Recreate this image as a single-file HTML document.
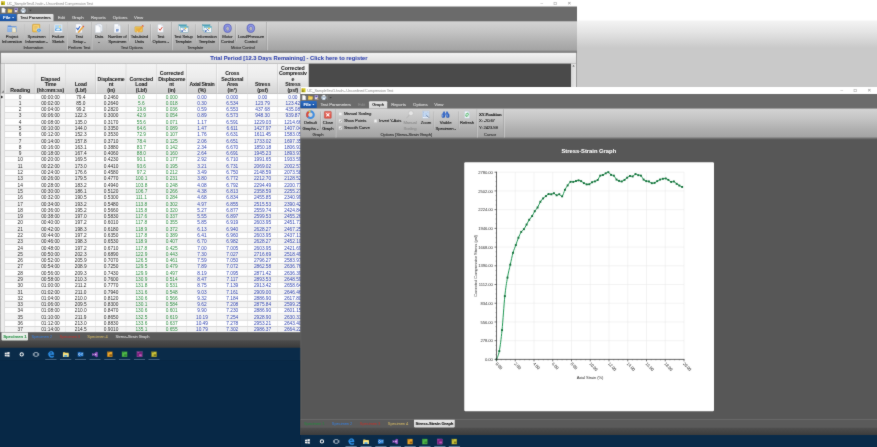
<!DOCTYPE html>
<html><head><meta charset="utf-8"><title>Unconfined Compression Test</title>
<style>
html,body{margin:0;padding:0;}
body{width:877px;height:447px;position:relative;overflow:hidden;background:#072846;font-family:"Liberation Sans",sans-serif;}
div{position:absolute;box-sizing:border-box;}
.t{white-space:nowrap;-webkit-text-stroke:0.25px currentColor;}
.tl{filter:brightness(1);}
.k{-webkit-text-stroke:0.42px currentColor;}
svg{position:absolute;overflow:visible;}
.w{overflow:hidden;}
.d{font-size:19.2px;line-height:19.2px;letter-spacing:-0.12px;-webkit-text-stroke:0;transform:translateX(-50%);}
.c0{color:#2a2a2a;}.c1{color:#2c8c40;}.c2{color:#3044b0;}
.r0,.r1{left:3.2px;width:1232px;height:25.16px;border-bottom:2px solid #d8d8d8;background:#fff;}
.r1{background:#f4f4f4;}
</style></head><body>
<svg width="0" height="0" style="left:0;top:0"><defs><filter id="soft" x="0" y="0" width="100%" height="100%" color-interpolation-filters="sRGB"><feConvolveMatrix order="3" kernelMatrix="0.02 0.06 0.02 0.06 0.680 0.06 0.02 0.06 0.02" divisor="1" edgeMode="duplicate" preserveAlpha="true"/></filter></defs></svg>
<div id="soft" style="left:0;top:0;width:877px;height:447px;filter:url(#soft);">
<div id="root" style="left:0;top:0;width:3508px;height:1788px;transform:scale(0.25);transform-origin:0 0;">


<div style="left:2308px;top:0px;width:1200px;height:348px;background:linear-gradient(#ffffff 0,#ffffff 80px,#f3f3f3 84px,#e4e4e4 128px,#c9c9c9 192px,#c9c9c9 348px);"></div>
<div class="w" style="left:0;top:0;width:2308px;height:1392px;background:#4b4b4b;">
<div style="left:0px;top:0px;width:2308px;height:27.2px;background:#ffffff;"></div>
<div style="left:4.4px;top:4.8px;width:16px;height:15.6px;background:linear-gradient(#d6cc2c,#c2b81e);"></div>
<div style="left:6px;top:13.2px;width:7.2px;height:5.2px;background:rgba(90,84,20,0.75);"></div>
<div style="left:5.6px;top:6.4px;width:4px;height:3.6px;background:rgba(190,70,40,0.7);"></div>
<div style="left:2215.2px;top:7.6px;width:12px;height:12px;background:transparent;border:2px solid #a0a0a0;"></div>
<div style="left:0px;top:27.2px;width:2308px;height:58px;background:#6b6b6b;"></div>
<svg style="left:6.4px;top:31.2px" width="16" height="20.8" viewBox="0 0 8 10.4"><path d="M0.5 0.5h4.5l2.5 2.5v6.9h-7z" fill="#fafafa" stroke="#b8b8b8" stroke-width="0.8"/></svg>
<svg style="left:30.4px;top:32.8px" width="19.2" height="17.6" viewBox="0 0 9.6 8.8"><path d="M0.4 1h3.2l1 1.2h4.6v6.2h-8.8z" fill="#e8b93c"/><path d="M0.4 8.4l1.6-4.4h7.4l-1.4 4.4z" fill="#f6d767"/></svg>
<svg style="left:57.2px;top:31.2px" width="17.6" height="20.8" viewBox="0 0 8.8 10.4"><rect x="0.6" y="0.4" width="6.4" height="8.6" fill="#dcdcf4" stroke="#7a6aa8" stroke-width="0.8"/><rect x="1.6" y="1.4" width="4.2" height="3" fill="#5a4a9a"/><path d="M5 6l3 3.6" stroke="#c8a23c" stroke-width="1.6"/></svg>
<svg style="left:82.4px;top:30.8px" width="22.4" height="21.6" viewBox="0 0 11.2 10.8"><rect x="3" y="0.4" width="5.2" height="3.4" fill="#f4f4f4" stroke="#9aa0a8" stroke-width="0.6"/><rect x="0.6" y="3.2" width="10" height="4.6" rx="1" fill="#c9d2dc" stroke="#8894a2" stroke-width="0.6"/><rect x="2.8" y="6.4" width="5.6" height="3.8" fill="#ffffff" stroke="#6a98c8" stroke-width="0.6"/></svg>
<div style="left:109.2px;top:31.2px;width:2px;height:20px;background:#8a8a8a;"></div>
<svg style="left:116.8px;top:39.2px" width="9.6" height="6.4" viewBox="0 0 6 4"><path d="M0 0h6l-3 4z" fill="#3a3a3a"/></svg>
<div style="left:0px;top:55.6px;width:66px;height:29.2px;background:linear-gradient(#2a6cc4,#174f9e);border-radius:3.2px 3.2px 0 0;"></div>
<svg style="left:48px;top:68px" width="8.8" height="5.2" viewBox="0 0 6 4"><path d="M0 0h6l-3 4z" fill="#fff"/></svg>
<div style="left:69.2px;top:56.4px;width:144.4px;height:28.8px;background:linear-gradient(#e6e6e6,#d4d4d4);border-radius:4px 4px 0 0;"></div>
<div style="left:0px;top:85.2px;width:2308px;height:118.4px;background:linear-gradient(#d4d4d4 0,#c4c4c4 35%,#b0b0b0 70%,#a2a2a2 100%);"></div>
<svg style="left:28.8px;top:94.4px" width="38.4" height="38.4" viewBox="0 0 24 24"><path d="M1 5h8l2 2h12v14h-22z" fill="#5f8fd6"/><path d="M1 9h22v12h-22z" fill="#8fb6ea"/><path d="M1 9h22v3h-22z" fill="#a9c8f2"/><path d="M12 10h7l3 3v9h-10z" fill="#efe9cf" stroke="#a89c70" stroke-width="0.8"/></svg>
<svg style="left:126.8px;top:94.4px" width="38.4" height="38.4" viewBox="0 0 24 24"><rect x="2" y="2" width="18" height="19" rx="1.5" fill="#f2c254" stroke="#c58f1e" stroke-width="1.2"/><rect x="4.5" y="5" width="13" height="12" fill="#f9dc8a"/><path d="M6 8h9M6 11h9M6 14h6" stroke="#c9962e" stroke-width="1.2"/><circle cx="18" cy="17" r="5.2" fill="#3f8ee0" stroke="#e8f2ff" stroke-width="1"/><rect x="17.1" y="15.6" width="1.8" height="4.4" fill="#fff"/><circle cx="18" cy="13.8" r="1.1" fill="#fff"/></svg>
<svg style="left:213.6px;top:94.4px" width="38.4" height="38.4" viewBox="0 0 24 24"><rect x="2" y="2" width="20" height="20" fill="#f4f7fb" stroke="#c2ccd8" stroke-width="1"/><rect x="4" y="4" width="16" height="14" fill="#a9d3f3"/><circle cx="15.5" cy="8" r="2.4" fill="#fbe08a"/><path d="M4 18v-4l4-3 4 3 3-2 5 3v3z" fill="#5aa0dd"/><rect x="7" y="13" width="9" height="4" fill="#eaf4fc"/></svg>
<svg style="left:297.6px;top:94.4px" width="38.4" height="38.4" viewBox="0 0 24 24"><path d="M3 1h12l4 4v18h-16z" fill="#fbfbfd" stroke="#b9c0cc" stroke-width="1"/><path d="M5 11l3.4 4.2 5.6-8.4" stroke="#2f62c4" stroke-width="2.6" fill="none"/><path d="M7 19h9" stroke="#9ab0d8" stroke-width="1.4"/><path d="M9 20l11-13 3 2.6-11 13-4 1.6z" fill="#f0a63c"/><path d="M20 7l1.6-1.9 3 2.6-1.6 1.9z" fill="#d94a3c"/></svg>
<svg style="left:376.4px;top:94.4px" width="38.4" height="38.4" viewBox="0 0 24 24"><path d="M7 1h10l4 4v15h-14z" fill="#eef2f8" stroke="#b5bfcd" stroke-width="1"/><path d="M3 4h10l4 4v15h-14z" fill="#fbfcfe" stroke="#b5bfcd" stroke-width="1"/><path d="M13 4v4h4" fill="#dfe6f0" stroke="#b5bfcd" stroke-width="0.8"/></svg>
<svg style="left:450px;top:94.4px" width="38.4" height="38.4" viewBox="0 0 24 24"><path d="M4 1h11l5 5v17h-16z" fill="#fbfcfe" stroke="#b5bfcd" stroke-width="1"/><path d="M15 1v5h5" fill="#dfe6f0" stroke="#b5bfcd" stroke-width="0.8"/><path d="M7 9h10M7 12h10" stroke="#c5cfe0" stroke-width="1"/><path d="M9 15.5h6.5M8.5 18.5h6.5M10.8 13.8l-0.8 6.4M14 13.8l-0.8 6.4" stroke="#3f6fc2" stroke-width="1.3"/></svg>
<svg style="left:538.4px;top:94.4px" width="38.4" height="38.4" viewBox="0 0 24 24"><rect x="1" y="8" width="19" height="13" rx="1.5" fill="#efc55a" stroke="#c9972a" stroke-width="1"/><path d="M4 12h12M4 15h10M4 18h7" stroke="#c79a32" stroke-width="1.1"/><path d="M7 19l11.5-13.5 3.2 2.7-11.5 13.5-4.4 1.8z" fill="#f0a53a"/><path d="M18.5 5.5l1.7-2 3.2 2.7-1.7 2z" fill="#de4335"/><path d="M7 19l-1.2 4.5 4.4-1.8z" fill="#f6dca8"/></svg>
<svg style="left:623.2px;top:94.4px" width="38.4" height="38.4" viewBox="0 0 24 24"><path d="M5 2h10l4 4v16h-14z" fill="#fbfcfe" stroke="#b5bfcd" stroke-width="1"/><path d="M15 2v4h4" fill="#dfe6f0" stroke="#b5bfcd" stroke-width="0.8"/><path d="M8 13l3 4 5.4-8" stroke="#d8402f" stroke-width="2.4" fill="none"/></svg>
<svg style="left:714.4px;top:94.4px" width="38.4" height="38.4" viewBox="0 0 24 24"><rect x="1" y="3" width="19" height="15" fill="#f2f6fa" stroke="#5b9aa8" stroke-width="1"/><rect x="1" y="3" width="19" height="3.5" fill="#4fa3b8"/><rect x="5" y="7" width="19" height="15" fill="#f7fafd" stroke="#5b9aa8" stroke-width="1"/><rect x="5" y="7" width="19" height="3.5" fill="#58b0c4"/><path d="M9 20l8-8" stroke="#8a96a6" stroke-width="2"/><circle cx="17.5" cy="12" r="2.2" fill="#e8c04a"/><path d="M11 12l7 7" stroke="#4a72c0" stroke-width="1.8"/><rect x="7" y="17" width="4" height="4" fill="#3f68c0"/></svg>
<svg style="left:808px;top:94.4px" width="38.4" height="38.4" viewBox="0 0 24 24"><rect x="1" y="3" width="19" height="15" fill="#f2f6fa" stroke="#5b9aa8" stroke-width="1"/><rect x="1" y="3" width="19" height="3.5" fill="#4fa3b8"/><rect x="5" y="7" width="19" height="15" fill="#f7fafd" stroke="#5b9aa8" stroke-width="1"/><rect x="5" y="7" width="19" height="3.5" fill="#58b0c4"/><path d="M9 20l8-8" stroke="#8a96a6" stroke-width="2"/><circle cx="17.5" cy="12" r="2.2" fill="#e8c04a"/><path d="M11 12l7 7" stroke="#4a72c0" stroke-width="1.8"/><rect x="7" y="17" width="4" height="4" fill="#3f68c0"/></svg>
<svg style="left:890.8px;top:94.4px" width="38.4" height="38.4" viewBox="0 0 24 24"><ellipse cx="12" cy="12" rx="9.5" ry="10.5" fill="#6f78d2"/><ellipse cx="12.4" cy="11.4" rx="8.2" ry="9.2" fill="#8d95e4"/><ellipse cx="12" cy="12" rx="9.5" ry="10.5" fill="none" stroke="#4a51a8" stroke-width="1.2"/><ellipse cx="12" cy="12.6" rx="4" ry="5.4" fill="#c4c6da" stroke="#4a51a8" stroke-width="1.1"/><ellipse cx="12.6" cy="13.3" rx="2.7" ry="4" fill="#b4b4b8"/></svg>
<svg style="left:984.4px;top:94.4px" width="38.4" height="38.4" viewBox="0 0 24 24"><ellipse cx="12" cy="12" rx="9.5" ry="10.5" fill="#6f78d2"/><ellipse cx="12.4" cy="11.4" rx="8.2" ry="9.2" fill="#8d95e4"/><ellipse cx="12" cy="12" rx="9.5" ry="10.5" fill="none" stroke="#4a51a8" stroke-width="1.2"/><ellipse cx="12" cy="12.6" rx="4" ry="5.4" fill="#c4c6da" stroke="#4a51a8" stroke-width="1.1"/><ellipse cx="12.6" cy="13.3" rx="2.7" ry="4" fill="#b4b4b8"/></svg>
<div style="left:96px;top:97.2px;width:2px;height:68px;background:rgba(120,120,120,0.55);"></div>
<div style="left:98px;top:97.2px;width:2px;height:68px;background:rgba(240,240,240,0.55);"></div>
<div style="left:197.2px;top:97.2px;width:2px;height:68px;background:rgba(120,120,120,0.55);"></div>
<div style="left:199.2px;top:97.2px;width:2px;height:68px;background:rgba(240,240,240,0.55);"></div>
<div style="left:424px;top:97.2px;width:2px;height:68px;background:rgba(120,120,120,0.55);"></div>
<div style="left:426px;top:97.2px;width:2px;height:68px;background:rgba(240,240,240,0.55);"></div>
<div style="left:514.4px;top:97.2px;width:2px;height:68px;background:rgba(120,120,120,0.55);"></div>
<div style="left:516.4px;top:97.2px;width:2px;height:68px;background:rgba(240,240,240,0.55);"></div>
<div style="left:601.6px;top:97.2px;width:2px;height:68px;background:rgba(120,120,120,0.55);"></div>
<div style="left:603.6px;top:97.2px;width:2px;height:68px;background:rgba(240,240,240,0.55);"></div>
<div style="left:781.2px;top:97.2px;width:2px;height:68px;background:rgba(120,120,120,0.55);"></div>
<div style="left:783.2px;top:97.2px;width:2px;height:68px;background:rgba(240,240,240,0.55);"></div>
<div style="left:942px;top:97.2px;width:2px;height:68px;background:rgba(120,120,120,0.55);"></div>
<div style="left:944px;top:97.2px;width:2px;height:68px;background:rgba(240,240,240,0.55);"></div>
<div style="left:267.6px;top:88.4px;width:2px;height:114px;background:#9a9a9a;"></div>
<div style="left:269.6px;top:88.4px;width:2px;height:114px;background:#d8d8d8;"></div>
<div style="left:364.8px;top:88.4px;width:2px;height:114px;background:#9a9a9a;"></div>
<div style="left:366.8px;top:88.4px;width:2px;height:114px;background:#d8d8d8;"></div>
<div style="left:685.6px;top:88.4px;width:2px;height:114px;background:#9a9a9a;"></div>
<div style="left:687.6px;top:88.4px;width:2px;height:114px;background:#d8d8d8;"></div>
<div style="left:873.6px;top:88.4px;width:2px;height:114px;background:#9a9a9a;"></div>
<div style="left:875.6px;top:88.4px;width:2px;height:114px;background:#d8d8d8;"></div>
<div style="left:1066.4px;top:88.4px;width:2px;height:114px;background:#9a9a9a;"></div>
<div style="left:1068.4px;top:88.4px;width:2px;height:114px;background:#d8d8d8;"></div>
<div style="left:0px;top:202.4px;width:2308px;height:8.8px;background:linear-gradient(#8c8c8c,#7a7a7a);"></div>
<div style="left:2.8px;top:211.2px;width:2302px;height:44px;background:linear-gradient(#f3f3f3,#dcdcdc);"></div>
<div style="left:0px;top:211.2px;width:4.4px;height:1180px;background:#8c8c8c;"></div>
<div style="left:1236px;top:255.2px;width:1048px;height:1080px;background:#4a4a4a;"></div>
<div style="left:2283.6px;top:255.2px;width:20.8px;height:1080px;background:linear-gradient(90deg,#d6d6d6,#e8e8e8);"></div>
<svg style="left:2290px;top:260.4px" width="8.8" height="6.4" viewBox="0 0 6 4"><path d="M0 4h6l-3-4z" fill="#555"/></svg>
<div style="left:2304.4px;top:211.2px;width:3.6px;height:1180px;background:#9c9c9c;"></div>
<div class="tl" style="left:0;top:0;width:3508px;height:1788px;">
<div class="t" style="top:5.72px;font-size:15.6px;line-height:15.6px;color:#a2a2a2;letter-spacing:-0.76px;left:27.6px;">UC_SampleTest1.hsdn - Unconfined Compression Test</div>
<div class="t" style="top:4.44px;font-size:18px;line-height:18px;color:#a0a0a0;left:2167.2px;transform:translateX(-50%);">&#8211;</div>
<div class="t" style="top:1.72px;font-size:22.4px;line-height:22.4px;color:#a0a0a0;left:2277.6px;transform:translateX(-50%);">&#215;</div>
<div class="t" style="top:61.08px;font-size:17.6px;line-height:17.6px;color:#ffffff;font-weight:bold;letter-spacing:-0.2px;left:27.2px;transform:translateX(-50%);">File</div>
<div class="t k" style="top:61.08px;font-size:17.6px;line-height:17.6px;color:#1a1a1a;letter-spacing:-0.4px;left:141.4px;transform:translateX(-50%);">Test Parameters</div>
<div class="t k" style="top:61.08px;font-size:17.6px;line-height:17.6px;color:#d6d6d6;letter-spacing:-0.4px;left:245px;transform:translateX(-50%);">Edit</div>
<div class="t k" style="top:61.08px;font-size:17.6px;line-height:17.6px;color:#d6d6d6;letter-spacing:-0.4px;left:311.4px;transform:translateX(-50%);">Graph</div>
<div class="t k" style="top:61.08px;font-size:17.6px;line-height:17.6px;color:#d6d6d6;letter-spacing:-0.4px;left:393px;transform:translateX(-50%);">Reports</div>
<div class="t k" style="top:61.08px;font-size:17.6px;line-height:17.6px;color:#d6d6d6;letter-spacing:-0.4px;left:480px;transform:translateX(-50%);">Options</div>
<div class="t k" style="top:61.08px;font-size:17.6px;line-height:17.6px;color:#d6d6d6;letter-spacing:-0.4px;left:554px;transform:translateX(-50%);">View</div>
<div class="t k" style="top:137.4px;font-size:17px;line-height:17px;color:#1c1c1c;letter-spacing:-0.48px;left:48px;transform:translateX(-50%);">Project</div>
<div class="t k" style="top:159.4px;font-size:17px;line-height:17px;color:#1c1c1c;letter-spacing:-0.48px;left:48px;transform:translateX(-50%);">Information</div>
<div class="t k" style="top:137.4px;font-size:17px;line-height:17px;color:#1c1c1c;letter-spacing:-0.48px;left:146px;transform:translateX(-50%);">Specimen</div>
<div class="t k" style="top:159.4px;font-size:17px;line-height:17px;color:#1c1c1c;letter-spacing:-0.48px;left:146px;transform:translateX(-50%);">Information -</div>
<div class="t k" style="top:137.4px;font-size:17px;line-height:17px;color:#1c1c1c;letter-spacing:-0.48px;left:232.8px;transform:translateX(-50%);">Failure</div>
<div class="t k" style="top:159.4px;font-size:17px;line-height:17px;color:#1c1c1c;letter-spacing:-0.48px;left:232.8px;transform:translateX(-50%);">Sketch</div>
<div class="t k" style="top:137.4px;font-size:17px;line-height:17px;color:#1c1c1c;letter-spacing:-0.48px;left:316.8px;transform:translateX(-50%);">Test</div>
<div class="t k" style="top:159.4px;font-size:17px;line-height:17px;color:#1c1c1c;letter-spacing:-0.48px;left:316.8px;transform:translateX(-50%);">Setup -</div>
<div class="t k" style="top:137.4px;font-size:17px;line-height:17px;color:#1c1c1c;letter-spacing:-0.48px;left:395.6px;transform:translateX(-50%);">Data</div>
<div class="t k" style="top:159.4px;font-size:17px;line-height:17px;color:#1c1c1c;letter-spacing:-0.48px;left:395.6px;transform:translateX(-50%);">-</div>
<div class="t k" style="top:137.4px;font-size:17px;line-height:17px;color:#1c1c1c;letter-spacing:-0.48px;left:469.2px;transform:translateX(-50%);">Number of</div>
<div class="t k" style="top:159.4px;font-size:17px;line-height:17px;color:#1c1c1c;letter-spacing:-0.48px;left:469.2px;transform:translateX(-50%);">Specimen</div>
<div class="t k" style="top:137.4px;font-size:17px;line-height:17px;color:#1c1c1c;letter-spacing:-0.48px;left:557.6px;transform:translateX(-50%);">Tabulated</div>
<div class="t k" style="top:159.4px;font-size:17px;line-height:17px;color:#1c1c1c;letter-spacing:-0.48px;left:557.6px;transform:translateX(-50%);">Units</div>
<div class="t k" style="top:137.4px;font-size:17px;line-height:17px;color:#1c1c1c;letter-spacing:-0.48px;left:642.4px;transform:translateX(-50%);">Test</div>
<div class="t k" style="top:159.4px;font-size:17px;line-height:17px;color:#1c1c1c;letter-spacing:-0.48px;left:642.4px;transform:translateX(-50%);">Options -</div>
<div class="t k" style="top:137.4px;font-size:17px;line-height:17px;color:#1c1c1c;letter-spacing:-0.48px;left:733.6px;transform:translateX(-50%);">Test Setup</div>
<div class="t k" style="top:159.4px;font-size:17px;line-height:17px;color:#1c1c1c;letter-spacing:-0.48px;left:733.6px;transform:translateX(-50%);">Template</div>
<div class="t k" style="top:137.4px;font-size:17px;line-height:17px;color:#1c1c1c;letter-spacing:-0.48px;left:827.2px;transform:translateX(-50%);">Information</div>
<div class="t k" style="top:159.4px;font-size:17px;line-height:17px;color:#1c1c1c;letter-spacing:-0.48px;left:827.2px;transform:translateX(-50%);">Template</div>
<div class="t k" style="top:137.4px;font-size:17px;line-height:17px;color:#1c1c1c;letter-spacing:-0.48px;left:910px;transform:translateX(-50%);">Motor</div>
<div class="t k" style="top:159.4px;font-size:17px;line-height:17px;color:#1c1c1c;letter-spacing:-0.48px;left:910px;transform:translateX(-50%);">Control</div>
<div class="t k" style="top:137.4px;font-size:17px;line-height:17px;color:#1c1c1c;letter-spacing:-0.48px;left:1003.6px;transform:translateX(-50%);">Load/Pressure</div>
<div class="t k" style="top:159.4px;font-size:17px;line-height:17px;color:#1c1c1c;letter-spacing:-0.48px;left:1003.6px;transform:translateX(-50%);">Control</div>
<div class="t k" style="top:184.28px;font-size:16.8px;line-height:16.8px;color:#333333;letter-spacing:-0.48px;left:133.6px;transform:translateX(-50%);">Information</div>
<div class="t k" style="top:184.28px;font-size:16.8px;line-height:16.8px;color:#333333;letter-spacing:-0.48px;left:316.8px;transform:translateX(-50%);">Perform Test</div>
<div class="t k" style="top:184.28px;font-size:16.8px;line-height:16.8px;color:#333333;letter-spacing:-0.48px;left:526.8px;transform:translateX(-50%);">Test Options</div>
<div class="t k" style="top:184.28px;font-size:16.8px;line-height:16.8px;color:#333333;letter-spacing:-0.48px;left:781.2px;transform:translateX(-50%);">Template</div>
<div class="t k" style="top:184.28px;font-size:16.8px;line-height:16.8px;color:#333333;letter-spacing:-0.48px;left:971.6px;transform:translateX(-50%);">Motor Control</div>
<div class="t" style="top:221.76px;font-size:23.12px;line-height:23.12px;color:#2c3eac;font-weight:bold;left:1155.6px;transform:translateX(-50%);">Trial Period [12.3 Days Remaining] - Click here to register</div>
</div>
<div style="left:3.2px;top:255.2px;width:16.8px;height:120px;background:linear-gradient(#e4e4e4,#cfcfcf);border-right:1.6px solid rgba(150,150,150,0.6);"></div>
<svg style="left:6.4px;top:360.8px" width="9.6" height="9.6" viewBox="0 0 6 6"><path d="M6 0v6h-6z" fill="#777"/></svg>
<div class="w" style="left:20px;top:255.2px;width:121.2px;height:120px;background:linear-gradient(#f4f4f4 0,#ececec 45%,#d2d2d2 100%);border-right:2px solid rgba(170,170,170,0.55);border-left:2px solid rgba(255,255,255,0.9);">
</div>
<div class="w" style="left:141.2px;top:255.2px;width:121.2px;height:120px;background:linear-gradient(#f4f4f4 0,#ececec 45%,#d2d2d2 100%);border-right:2px solid rgba(170,170,170,0.55);border-left:2px solid rgba(255,255,255,0.9);">
</div>
<div class="w" style="left:262.4px;top:255.2px;width:121.2px;height:120px;background:linear-gradient(#f4f4f4 0,#ececec 45%,#d2d2d2 100%);border-right:2px solid rgba(170,170,170,0.55);border-left:2px solid rgba(255,255,255,0.9);">
</div>
<div class="w" style="left:383.6px;top:255.2px;width:121.2px;height:120px;background:linear-gradient(#f4f4f4 0,#ececec 45%,#d2d2d2 100%);border-right:2px solid rgba(170,170,170,0.55);border-left:2px solid rgba(255,255,255,0.9);">
</div>
<div class="w" style="left:504.8px;top:255.2px;width:121.2px;height:120px;background:linear-gradient(#f4f4f4 0,#ececec 45%,#d2d2d2 100%);border-right:2px solid rgba(170,170,170,0.55);border-left:2px solid rgba(255,255,255,0.9);">
</div>
<div class="w" style="left:626px;top:255.2px;width:121.2px;height:120px;background:linear-gradient(#f4f4f4 0,#ececec 45%,#d2d2d2 100%);border-right:2px solid rgba(170,170,170,0.55);border-left:2px solid rgba(255,255,255,0.9);">
</div>
<div class="w" style="left:747.2px;top:255.2px;width:121.2px;height:120px;background:linear-gradient(#f4f4f4 0,#ececec 45%,#d2d2d2 100%);border-right:2px solid rgba(170,170,170,0.55);border-left:2px solid rgba(255,255,255,0.9);">
</div>
<div class="w" style="left:868.4px;top:255.2px;width:121.2px;height:120px;background:linear-gradient(#f4f4f4 0,#ececec 45%,#d2d2d2 100%);border-right:2px solid rgba(170,170,170,0.55);border-left:2px solid rgba(255,255,255,0.9);">
</div>
<div class="w" style="left:989.6px;top:255.2px;width:121.2px;height:120px;background:linear-gradient(#f4f4f4 0,#ececec 45%,#d2d2d2 100%);border-right:2px solid rgba(170,170,170,0.55);border-left:2px solid rgba(255,255,255,0.9);">
</div>
<div class="w" style="left:1110.8px;top:255.2px;width:124.4px;height:120px;background:linear-gradient(#f4f4f4 0,#ececec 45%,#d2d2d2 100%);border-right:2px solid rgba(170,170,170,0.55);border-left:2px solid rgba(255,255,255,0.9);">
</div>
<div style="left:3.2px;top:373.6px;width:1232px;height:2.4px;background:#a8a8a8;"></div>
<div class="r0" style="top:375.2px;"></div>
<div class="r1" style="top:400.36px;"></div>
<div class="r0" style="top:425.52px;"></div>
<div class="r1" style="top:450.68px;"></div>
<div class="r0" style="top:475.84px;"></div>
<div class="r1" style="top:501px;"></div>
<div class="r0" style="top:526.16px;"></div>
<div class="r1" style="top:551.32px;"></div>
<div class="r0" style="top:576.48px;"></div>
<div class="r1" style="top:601.64px;"></div>
<div class="r0" style="top:626.8px;"></div>
<div class="r1" style="top:651.96px;"></div>
<div class="r0" style="top:677.12px;"></div>
<div class="r1" style="top:702.28px;"></div>
<div class="r0" style="top:727.44px;"></div>
<div class="r1" style="top:752.6px;"></div>
<div class="r0" style="top:777.76px;"></div>
<div class="r1" style="top:802.92px;"></div>
<div class="r0" style="top:828.08px;"></div>
<div class="r1" style="top:853.24px;"></div>
<div class="r0" style="top:878.4px;"></div>
<div class="r1" style="top:903.56px;"></div>
<div class="r0" style="top:928.72px;"></div>
<div class="r1" style="top:953.88px;"></div>
<div class="r0" style="top:979.04px;"></div>
<div class="r1" style="top:1004.2px;"></div>
<div class="r0" style="top:1029.36px;"></div>
<div class="r1" style="top:1054.52px;"></div>
<div class="r0" style="top:1079.68px;"></div>
<div class="r1" style="top:1104.84px;"></div>
<div class="r0" style="top:1130px;"></div>
<div class="r1" style="top:1155.16px;"></div>
<div class="r0" style="top:1180.32px;"></div>
<div class="r1" style="top:1205.48px;"></div>
<div class="r0" style="top:1230.64px;"></div>
<div class="r1" style="top:1255.8px;"></div>
<div class="r0" style="top:1280.96px;"></div>
<div class="r1" style="top:1306.12px;"></div>
<div style="left:3.2px;top:375.2px;width:16.8px;height:953.6px;background:#ececec;border-right:1.6px solid rgba(150,150,150,0.7);"></div>
<div style="left:139.2px;top:375.2px;width:2px;height:953.6px;background:#dadada;"></div>
<div style="left:260.4px;top:375.2px;width:2px;height:953.6px;background:#dadada;"></div>
<div style="left:381.6px;top:375.2px;width:2px;height:953.6px;background:#dadada;"></div>
<div style="left:502.8px;top:375.2px;width:2px;height:953.6px;background:#dadada;"></div>
<div style="left:624px;top:375.2px;width:2px;height:953.6px;background:#dadada;"></div>
<div style="left:745.2px;top:375.2px;width:2px;height:953.6px;background:#dadada;"></div>
<div style="left:866.4px;top:375.2px;width:2px;height:953.6px;background:#dadada;"></div>
<div style="left:987.6px;top:375.2px;width:2px;height:953.6px;background:#dadada;"></div>
<div style="left:1108.8px;top:375.2px;width:2px;height:953.6px;background:#dadada;"></div>
<div style="left:1230px;top:375.2px;width:2px;height:953.6px;background:#dadada;"></div>
<svg style="left:3.6px;top:381.6px" width="8.8" height="12" viewBox="0 0 4 6"><path d="M0 0l4 3-4 3z" fill="#111"/></svg>
<div class="tl" style="left:3.2px;top:255.2px;width:1232px;height:1073.6px;overflow:hidden;"><div style="left:-3.2px;top:-255.2px;width:3508px;height:1788px;">
<div class="t" style="top:349.36px;font-size:20.8px;line-height:20.8px;color:#262626;font-weight:bold;letter-spacing:-0.4px;left:80.6px;transform:translateX(-50%);">Reading</div>
<div class="t" style="top:305.6px;font-size:20.8px;line-height:20.8px;color:#262626;font-weight:bold;letter-spacing:-0.4px;left:201.8px;transform:translateX(-50%);">Elapsed</div>
<div class="t" style="top:327.48px;font-size:20.8px;line-height:20.8px;color:#262626;font-weight:bold;letter-spacing:-0.4px;left:201.8px;transform:translateX(-50%);">Time</div>
<div class="t" style="top:349.36px;font-size:20.8px;line-height:20.8px;color:#262626;font-weight:bold;letter-spacing:-0.4px;left:201.8px;transform:translateX(-50%);">(hh:mm:ss)</div>
<div class="t" style="top:327.48px;font-size:20.8px;line-height:20.8px;color:#262626;font-weight:bold;letter-spacing:-0.4px;left:323px;transform:translateX(-50%);">Load</div>
<div class="t" style="top:349.36px;font-size:20.8px;line-height:20.8px;color:#262626;font-weight:bold;letter-spacing:-0.4px;left:323px;transform:translateX(-50%);">(Lbf)</div>
<div class="t" style="top:305.6px;font-size:20.8px;line-height:20.8px;color:#262626;font-weight:bold;letter-spacing:-0.8px;left:444.2px;transform:translateX(-50%);">Displaceme</div>
<div class="t" style="top:327.48px;font-size:20.8px;line-height:20.8px;color:#262626;font-weight:bold;letter-spacing:-0.4px;left:444.2px;transform:translateX(-50%);">nt</div>
<div class="t" style="top:349.36px;font-size:20.8px;line-height:20.8px;color:#262626;font-weight:bold;letter-spacing:-0.4px;left:444.2px;transform:translateX(-50%);">(in)</div>
<div class="t" style="top:305.6px;font-size:20.8px;line-height:20.8px;color:#262626;font-weight:bold;letter-spacing:-0.4px;left:565.4px;transform:translateX(-50%);">Corrected</div>
<div class="t" style="top:327.48px;font-size:20.8px;line-height:20.8px;color:#262626;font-weight:bold;letter-spacing:-0.4px;left:565.4px;transform:translateX(-50%);">Load</div>
<div class="t" style="top:349.36px;font-size:20.8px;line-height:20.8px;color:#262626;font-weight:bold;letter-spacing:-0.4px;left:565.4px;transform:translateX(-50%);">(Lbf)</div>
<div class="t" style="top:283.72px;font-size:20.8px;line-height:20.8px;color:#262626;font-weight:bold;letter-spacing:-0.4px;left:686.6px;transform:translateX(-50%);">Corrected</div>
<div class="t" style="top:305.6px;font-size:20.8px;line-height:20.8px;color:#262626;font-weight:bold;letter-spacing:-0.8px;left:686.6px;transform:translateX(-50%);">Displaceme</div>
<div class="t" style="top:327.48px;font-size:20.8px;line-height:20.8px;color:#262626;font-weight:bold;letter-spacing:-0.4px;left:686.6px;transform:translateX(-50%);">nt</div>
<div class="t" style="top:349.36px;font-size:20.8px;line-height:20.8px;color:#262626;font-weight:bold;letter-spacing:-0.4px;left:686.6px;transform:translateX(-50%);">(in)</div>
<div class="t" style="top:327.48px;font-size:20.8px;line-height:20.8px;color:#262626;font-weight:bold;letter-spacing:-1.2px;left:807.8px;transform:translateX(-50%);">Axial Strain</div>
<div class="t" style="top:349.36px;font-size:20.8px;line-height:20.8px;color:#262626;font-weight:bold;letter-spacing:-0.4px;left:807.8px;transform:translateX(-50%);">(%)</div>
<div class="t" style="top:283.72px;font-size:20.8px;line-height:20.8px;color:#262626;font-weight:bold;letter-spacing:-0.4px;left:929px;transform:translateX(-50%);">Cross</div>
<div class="t" style="top:305.6px;font-size:20.8px;line-height:20.8px;color:#262626;font-weight:bold;letter-spacing:-0.4px;left:929px;transform:translateX(-50%);">Sectional</div>
<div class="t" style="top:327.48px;font-size:20.8px;line-height:20.8px;color:#262626;font-weight:bold;letter-spacing:-0.4px;left:929px;transform:translateX(-50%);">Area</div>
<div class="t" style="top:349.36px;font-size:20.8px;line-height:20.8px;color:#262626;font-weight:bold;letter-spacing:-0.4px;left:929px;transform:translateX(-50%);">(in&#178;)</div>
<div class="t" style="top:327.48px;font-size:20.8px;line-height:20.8px;color:#262626;font-weight:bold;letter-spacing:-0.4px;left:1050.2px;transform:translateX(-50%);">Stress</div>
<div class="t" style="top:349.36px;font-size:20.8px;line-height:20.8px;color:#262626;font-weight:bold;letter-spacing:-0.4px;left:1050.2px;transform:translateX(-50%);">(psf)</div>
<div class="t" style="top:261.84px;font-size:20.8px;line-height:20.8px;color:#262626;font-weight:bold;letter-spacing:-0.4px;left:1171.4px;transform:translateX(-50%);">Corrected</div>
<div class="t" style="top:283.72px;font-size:20.8px;line-height:20.8px;color:#262626;font-weight:bold;letter-spacing:-0.8px;left:1171.4px;transform:translateX(-50%);">Compressiv</div>
<div class="t" style="top:305.6px;font-size:20.8px;line-height:20.8px;color:#262626;font-weight:bold;letter-spacing:-0.4px;left:1171.4px;transform:translateX(-50%);">e</div>
<div class="t" style="top:327.48px;font-size:20.8px;line-height:20.8px;color:#262626;font-weight:bold;letter-spacing:-0.4px;left:1171.4px;transform:translateX(-50%);">Stress</div>
<div class="t" style="top:349.36px;font-size:20.8px;line-height:20.8px;color:#262626;font-weight:bold;letter-spacing:-0.4px;left:1171.4px;transform:translateX(-50%);">(psf)</div>
<div class="t d c0" style="left:80.6px;top:377.84px;">0</div>
<div class="t d c0" style="left:201.8px;top:377.84px;">00:00:00</div>
<div class="t d c0" style="left:323px;top:377.84px;">79.4</div>
<div class="t d c0" style="left:444.2px;top:377.84px;">0.2460</div>
<div class="t d c1" style="left:565.4px;top:377.84px;">0.0</div>
<div class="t d c1" style="left:686.6px;top:377.84px;">0.000</div>
<div class="t d c2" style="left:807.8px;top:377.84px;">0.00</div>
<div class="t d c2" style="left:929px;top:377.84px;">0.000</div>
<div class="t d c2" style="left:1050.2px;top:377.84px;">0.00</div>
<div class="t d c2" style="left:1171.4px;top:377.84px;">0.00</div>
<div class="t d c0" style="left:80.6px;top:403px;">1</div>
<div class="t d c0" style="left:201.8px;top:403px;">00:02:00</div>
<div class="t d c0" style="left:323px;top:403px;">85.0</div>
<div class="t d c0" style="left:444.2px;top:403px;">0.2640</div>
<div class="t d c1" style="left:565.4px;top:403px;">5.6</div>
<div class="t d c1" style="left:686.6px;top:403px;">0.018</div>
<div class="t d c2" style="left:807.8px;top:403px;">0.30</div>
<div class="t d c2" style="left:929px;top:403px;">6.534</div>
<div class="t d c2" style="left:1050.2px;top:403px;">123.79</div>
<div class="t d c2" style="left:1171.4px;top:403px;">123.42</div>
<div class="t d c0" style="left:80.6px;top:428.16px;">2</div>
<div class="t d c0" style="left:201.8px;top:428.16px;">00:04:00</div>
<div class="t d c0" style="left:323px;top:428.16px;">99.2</div>
<div class="t d c0" style="left:444.2px;top:428.16px;">0.2820</div>
<div class="t d c1" style="left:565.4px;top:428.16px;">19.8</div>
<div class="t d c1" style="left:686.6px;top:428.16px;">0.036</div>
<div class="t d c2" style="left:807.8px;top:428.16px;">0.59</div>
<div class="t d c2" style="left:929px;top:428.16px;">6.553</div>
<div class="t d c2" style="left:1050.2px;top:428.16px;">437.68</div>
<div class="t d c2" style="left:1171.4px;top:428.16px;">435.08</div>
<div class="t d c0" style="left:80.6px;top:453.32px;">3</div>
<div class="t d c0" style="left:201.8px;top:453.32px;">00:06:00</div>
<div class="t d c0" style="left:323px;top:453.32px;">122.3</div>
<div class="t d c0" style="left:444.2px;top:453.32px;">0.3000</div>
<div class="t d c1" style="left:565.4px;top:453.32px;">42.9</div>
<div class="t d c1" style="left:686.6px;top:453.32px;">0.054</div>
<div class="t d c2" style="left:807.8px;top:453.32px;">0.89</div>
<div class="t d c2" style="left:929px;top:453.32px;">6.573</div>
<div class="t d c2" style="left:1050.2px;top:453.32px;">948.30</div>
<div class="t d c2" style="left:1171.4px;top:453.32px;">939.87</div>
<div class="t d c0" style="left:80.6px;top:478.48px;">4</div>
<div class="t d c0" style="left:201.8px;top:478.48px;">00:08:00</div>
<div class="t d c0" style="left:323px;top:478.48px;">135.0</div>
<div class="t d c0" style="left:444.2px;top:478.48px;">0.3170</div>
<div class="t d c1" style="left:565.4px;top:478.48px;">55.6</div>
<div class="t d c1" style="left:686.6px;top:478.48px;">0.071</div>
<div class="t d c2" style="left:807.8px;top:478.48px;">1.17</div>
<div class="t d c2" style="left:929px;top:478.48px;">6.591</div>
<div class="t d c2" style="left:1050.2px;top:478.48px;">1229.03</div>
<div class="t d c2" style="left:1171.4px;top:478.48px;">1214.66</div>
<div class="t d c0" style="left:80.6px;top:503.64px;">5</div>
<div class="t d c0" style="left:201.8px;top:503.64px;">00:10:00</div>
<div class="t d c0" style="left:323px;top:503.64px;">144.0</div>
<div class="t d c0" style="left:444.2px;top:503.64px;">0.3350</div>
<div class="t d c1" style="left:565.4px;top:503.64px;">64.6</div>
<div class="t d c1" style="left:686.6px;top:503.64px;">0.089</div>
<div class="t d c2" style="left:807.8px;top:503.64px;">1.47</div>
<div class="t d c2" style="left:929px;top:503.64px;">6.611</div>
<div class="t d c2" style="left:1050.2px;top:503.64px;">1427.97</div>
<div class="t d c2" style="left:1171.4px;top:503.64px;">1407.04</div>
<div class="t d c0" style="left:80.6px;top:528.8px;">6</div>
<div class="t d c0" style="left:201.8px;top:528.8px;">00:12:00</div>
<div class="t d c0" style="left:323px;top:528.8px;">152.3</div>
<div class="t d c0" style="left:444.2px;top:528.8px;">0.3530</div>
<div class="t d c1" style="left:565.4px;top:528.8px;">72.9</div>
<div class="t d c1" style="left:686.6px;top:528.8px;">0.107</div>
<div class="t d c2" style="left:807.8px;top:528.8px;">1.76</div>
<div class="t d c2" style="left:929px;top:528.8px;">6.631</div>
<div class="t d c2" style="left:1050.2px;top:528.8px;">1611.45</div>
<div class="t d c2" style="left:1171.4px;top:528.8px;">1583.05</div>
<div class="t d c0" style="left:80.6px;top:553.96px;">7</div>
<div class="t d c0" style="left:201.8px;top:553.96px;">00:14:00</div>
<div class="t d c0" style="left:323px;top:553.96px;">157.8</div>
<div class="t d c0" style="left:444.2px;top:553.96px;">0.3710</div>
<div class="t d c1" style="left:565.4px;top:553.96px;">78.4</div>
<div class="t d c1" style="left:686.6px;top:553.96px;">0.125</div>
<div class="t d c2" style="left:807.8px;top:553.96px;">2.06</div>
<div class="t d c2" style="left:929px;top:553.96px;">6.651</div>
<div class="t d c2" style="left:1050.2px;top:553.96px;">1733.02</div>
<div class="t d c2" style="left:1171.4px;top:553.96px;">1697.35</div>
<div class="t d c0" style="left:80.6px;top:579.12px;">8</div>
<div class="t d c0" style="left:201.8px;top:579.12px;">00:16:00</div>
<div class="t d c0" style="left:323px;top:579.12px;">163.1</div>
<div class="t d c0" style="left:444.2px;top:579.12px;">0.3880</div>
<div class="t d c1" style="left:565.4px;top:579.12px;">83.7</div>
<div class="t d c1" style="left:686.6px;top:579.12px;">0.142</div>
<div class="t d c2" style="left:807.8px;top:579.12px;">2.34</div>
<div class="t d c2" style="left:929px;top:579.12px;">6.670</div>
<div class="t d c2" style="left:1050.2px;top:579.12px;">1850.18</div>
<div class="t d c2" style="left:1171.4px;top:579.12px;">1806.91</div>
<div class="t d c0" style="left:80.6px;top:604.28px;">9</div>
<div class="t d c0" style="left:201.8px;top:604.28px;">00:18:00</div>
<div class="t d c0" style="left:323px;top:604.28px;">167.4</div>
<div class="t d c0" style="left:444.2px;top:604.28px;">0.4060</div>
<div class="t d c1" style="left:565.4px;top:604.28px;">88.0</div>
<div class="t d c1" style="left:686.6px;top:604.28px;">0.160</div>
<div class="t d c2" style="left:807.8px;top:604.28px;">2.64</div>
<div class="t d c2" style="left:929px;top:604.28px;">6.691</div>
<div class="t d c2" style="left:1050.2px;top:604.28px;">1945.23</div>
<div class="t d c2" style="left:1171.4px;top:604.28px;">1893.97</div>
<div class="t d c0" style="left:80.6px;top:629.44px;">10</div>
<div class="t d c0" style="left:201.8px;top:629.44px;">00:20:00</div>
<div class="t d c0" style="left:323px;top:629.44px;">169.5</div>
<div class="t d c0" style="left:444.2px;top:629.44px;">0.4230</div>
<div class="t d c1" style="left:565.4px;top:629.44px;">90.1</div>
<div class="t d c1" style="left:686.6px;top:629.44px;">0.177</div>
<div class="t d c2" style="left:807.8px;top:629.44px;">2.92</div>
<div class="t d c2" style="left:929px;top:629.44px;">6.710</div>
<div class="t d c2" style="left:1050.2px;top:629.44px;">1991.65</div>
<div class="t d c2" style="left:1171.4px;top:629.44px;">1933.59</div>
<div class="t d c0" style="left:80.6px;top:654.6px;">11</div>
<div class="t d c0" style="left:201.8px;top:654.6px;">00:22:00</div>
<div class="t d c0" style="left:323px;top:654.6px;">173.0</div>
<div class="t d c0" style="left:444.2px;top:654.6px;">0.4410</div>
<div class="t d c1" style="left:565.4px;top:654.6px;">93.6</div>
<div class="t d c1" style="left:686.6px;top:654.6px;">0.195</div>
<div class="t d c2" style="left:807.8px;top:654.6px;">3.21</div>
<div class="t d c2" style="left:929px;top:654.6px;">6.731</div>
<div class="t d c2" style="left:1050.2px;top:654.6px;">2069.02</div>
<div class="t d c2" style="left:1171.4px;top:654.6px;">2002.57</div>
<div class="t d c0" style="left:80.6px;top:679.76px;">12</div>
<div class="t d c0" style="left:201.8px;top:679.76px;">00:24:00</div>
<div class="t d c0" style="left:323px;top:679.76px;">176.6</div>
<div class="t d c0" style="left:444.2px;top:679.76px;">0.4580</div>
<div class="t d c1" style="left:565.4px;top:679.76px;">97.2</div>
<div class="t d c1" style="left:686.6px;top:679.76px;">0.212</div>
<div class="t d c2" style="left:807.8px;top:679.76px;">3.49</div>
<div class="t d c2" style="left:929px;top:679.76px;">6.750</div>
<div class="t d c2" style="left:1050.2px;top:679.76px;">2148.59</div>
<div class="t d c2" style="left:1171.4px;top:679.76px;">2073.58</div>
<div class="t d c0" style="left:80.6px;top:704.92px;">13</div>
<div class="t d c0" style="left:201.8px;top:704.92px;">00:26:00</div>
<div class="t d c0" style="left:323px;top:704.92px;">179.5</div>
<div class="t d c0" style="left:444.2px;top:704.92px;">0.4770</div>
<div class="t d c1" style="left:565.4px;top:704.92px;">100.1</div>
<div class="t d c1" style="left:686.6px;top:704.92px;">0.231</div>
<div class="t d c2" style="left:807.8px;top:704.92px;">3.80</div>
<div class="t d c2" style="left:929px;top:704.92px;">6.772</div>
<div class="t d c2" style="left:1050.2px;top:704.92px;">2212.70</div>
<div class="t d c2" style="left:1171.4px;top:704.92px;">2128.52</div>
<div class="t d c0" style="left:80.6px;top:730.08px;">14</div>
<div class="t d c0" style="left:201.8px;top:730.08px;">00:28:00</div>
<div class="t d c0" style="left:323px;top:730.08px;">183.2</div>
<div class="t d c0" style="left:444.2px;top:730.08px;">0.4940</div>
<div class="t d c1" style="left:565.4px;top:730.08px;">103.8</div>
<div class="t d c1" style="left:686.6px;top:730.08px;">0.248</div>
<div class="t d c2" style="left:807.8px;top:730.08px;">4.08</div>
<div class="t d c2" style="left:929px;top:730.08px;">6.792</div>
<div class="t d c2" style="left:1050.2px;top:730.08px;">2294.49</div>
<div class="t d c2" style="left:1171.4px;top:730.08px;">2200.77</div>
<div class="t d c0" style="left:80.6px;top:755.24px;">15</div>
<div class="t d c0" style="left:201.8px;top:755.24px;">00:30:00</div>
<div class="t d c0" style="left:323px;top:755.24px;">186.1</div>
<div class="t d c0" style="left:444.2px;top:755.24px;">0.5120</div>
<div class="t d c1" style="left:565.4px;top:755.24px;">106.7</div>
<div class="t d c1" style="left:686.6px;top:755.24px;">0.266</div>
<div class="t d c2" style="left:807.8px;top:755.24px;">4.38</div>
<div class="t d c2" style="left:929px;top:755.24px;">6.813</div>
<div class="t d c2" style="left:1050.2px;top:755.24px;">2358.59</div>
<div class="t d c2" style="left:1171.4px;top:755.24px;">2255.27</div>
<div class="t d c0" style="left:80.6px;top:780.4px;">16</div>
<div class="t d c0" style="left:201.8px;top:780.4px;">00:32:00</div>
<div class="t d c0" style="left:323px;top:780.4px;">190.5</div>
<div class="t d c0" style="left:444.2px;top:780.4px;">0.5300</div>
<div class="t d c1" style="left:565.4px;top:780.4px;">111.1</div>
<div class="t d c1" style="left:686.6px;top:780.4px;">0.284</div>
<div class="t d c2" style="left:807.8px;top:780.4px;">4.68</div>
<div class="t d c2" style="left:929px;top:780.4px;">6.834</div>
<div class="t d c2" style="left:1050.2px;top:780.4px;">2455.85</div>
<div class="t d c2" style="left:1171.4px;top:780.4px;">2340.99</div>
<div class="t d c0" style="left:80.6px;top:805.56px;">17</div>
<div class="t d c0" style="left:201.8px;top:805.56px;">00:34:00</div>
<div class="t d c0" style="left:323px;top:805.56px;">193.2</div>
<div class="t d c0" style="left:444.2px;top:805.56px;">0.5480</div>
<div class="t d c1" style="left:565.4px;top:805.56px;">113.8</div>
<div class="t d c1" style="left:686.6px;top:805.56px;">0.302</div>
<div class="t d c2" style="left:807.8px;top:805.56px;">4.97</div>
<div class="t d c2" style="left:929px;top:805.56px;">6.855</div>
<div class="t d c2" style="left:1050.2px;top:805.56px;">2515.53</div>
<div class="t d c2" style="left:1171.4px;top:805.56px;">2390.42</div>
<div class="t d c0" style="left:80.6px;top:830.72px;">18</div>
<div class="t d c0" style="left:201.8px;top:830.72px;">00:36:00</div>
<div class="t d c0" style="left:323px;top:830.72px;">195.2</div>
<div class="t d c0" style="left:444.2px;top:830.72px;">0.5660</div>
<div class="t d c1" style="left:565.4px;top:830.72px;">115.8</div>
<div class="t d c1" style="left:686.6px;top:830.72px;">0.320</div>
<div class="t d c2" style="left:807.8px;top:830.72px;">5.27</div>
<div class="t d c2" style="left:929px;top:830.72px;">6.877</div>
<div class="t d c2" style="left:1050.2px;top:830.72px;">2559.74</div>
<div class="t d c2" style="left:1171.4px;top:830.72px;">2424.84</div>
<div class="t d c0" style="left:80.6px;top:855.88px;">19</div>
<div class="t d c0" style="left:201.8px;top:855.88px;">00:38:00</div>
<div class="t d c0" style="left:323px;top:855.88px;">197.0</div>
<div class="t d c0" style="left:444.2px;top:855.88px;">0.5830</div>
<div class="t d c1" style="left:565.4px;top:855.88px;">117.6</div>
<div class="t d c1" style="left:686.6px;top:855.88px;">0.337</div>
<div class="t d c2" style="left:807.8px;top:855.88px;">5.55</div>
<div class="t d c2" style="left:929px;top:855.88px;">6.897</div>
<div class="t d c2" style="left:1050.2px;top:855.88px;">2599.53</div>
<div class="t d c2" style="left:1171.4px;top:855.88px;">2455.26</div>
<div class="t d c0" style="left:80.6px;top:881.04px;">20</div>
<div class="t d c0" style="left:201.8px;top:881.04px;">00:40:00</div>
<div class="t d c0" style="left:323px;top:881.04px;">197.2</div>
<div class="t d c0" style="left:444.2px;top:881.04px;">0.6010</div>
<div class="t d c1" style="left:565.4px;top:881.04px;">117.8</div>
<div class="t d c1" style="left:686.6px;top:881.04px;">0.355</div>
<div class="t d c2" style="left:807.8px;top:881.04px;">5.85</div>
<div class="t d c2" style="left:929px;top:881.04px;">6.919</div>
<div class="t d c2" style="left:1050.2px;top:881.04px;">2603.95</div>
<div class="t d c2" style="left:1171.4px;top:881.04px;">2451.71</div>
<div class="t d c0" style="left:80.6px;top:906.2px;">21</div>
<div class="t d c0" style="left:201.8px;top:906.2px;">00:42:00</div>
<div class="t d c0" style="left:323px;top:906.2px;">198.3</div>
<div class="t d c0" style="left:444.2px;top:906.2px;">0.6180</div>
<div class="t d c1" style="left:565.4px;top:906.2px;">118.9</div>
<div class="t d c1" style="left:686.6px;top:906.2px;">0.372</div>
<div class="t d c2" style="left:807.8px;top:906.2px;">6.13</div>
<div class="t d c2" style="left:929px;top:906.2px;">6.940</div>
<div class="t d c2" style="left:1050.2px;top:906.2px;">2628.27</div>
<div class="t d c2" style="left:1171.4px;top:906.2px;">2467.25</div>
<div class="t d c0" style="left:80.6px;top:931.36px;">22</div>
<div class="t d c0" style="left:201.8px;top:931.36px;">00:44:00</div>
<div class="t d c0" style="left:323px;top:931.36px;">197.2</div>
<div class="t d c0" style="left:444.2px;top:931.36px;">0.6350</div>
<div class="t d c1" style="left:565.4px;top:931.36px;">117.8</div>
<div class="t d c1" style="left:686.6px;top:931.36px;">0.389</div>
<div class="t d c2" style="left:807.8px;top:931.36px;">6.41</div>
<div class="t d c2" style="left:929px;top:931.36px;">6.960</div>
<div class="t d c2" style="left:1050.2px;top:931.36px;">2603.95</div>
<div class="t d c2" style="left:1171.4px;top:931.36px;">2437.13</div>
<div class="t d c0" style="left:80.6px;top:956.52px;">23</div>
<div class="t d c0" style="left:201.8px;top:956.52px;">00:46:00</div>
<div class="t d c0" style="left:323px;top:956.52px;">198.3</div>
<div class="t d c0" style="left:444.2px;top:956.52px;">0.6530</div>
<div class="t d c1" style="left:565.4px;top:956.52px;">118.9</div>
<div class="t d c1" style="left:686.6px;top:956.52px;">0.407</div>
<div class="t d c2" style="left:807.8px;top:956.52px;">6.70</div>
<div class="t d c2" style="left:929px;top:956.52px;">6.982</div>
<div class="t d c2" style="left:1050.2px;top:956.52px;">2628.27</div>
<div class="t d c2" style="left:1171.4px;top:956.52px;">2452.10</div>
<div class="t d c0" style="left:80.6px;top:981.68px;">24</div>
<div class="t d c0" style="left:201.8px;top:981.68px;">00:48:00</div>
<div class="t d c0" style="left:323px;top:981.68px;">197.2</div>
<div class="t d c0" style="left:444.2px;top:981.68px;">0.6710</div>
<div class="t d c1" style="left:565.4px;top:981.68px;">117.8</div>
<div class="t d c1" style="left:686.6px;top:981.68px;">0.425</div>
<div class="t d c2" style="left:807.8px;top:981.68px;">7.00</div>
<div class="t d c2" style="left:929px;top:981.68px;">7.005</div>
<div class="t d c2" style="left:1050.2px;top:981.68px;">2603.95</div>
<div class="t d c2" style="left:1171.4px;top:981.68px;">2421.69</div>
<div class="t d c0" style="left:80.6px;top:1006.84px;">25</div>
<div class="t d c0" style="left:201.8px;top:1006.84px;">00:50:00</div>
<div class="t d c0" style="left:323px;top:1006.84px;">202.3</div>
<div class="t d c0" style="left:444.2px;top:1006.84px;">0.6890</div>
<div class="t d c1" style="left:565.4px;top:1006.84px;">122.9</div>
<div class="t d c1" style="left:686.6px;top:1006.84px;">0.443</div>
<div class="t d c2" style="left:807.8px;top:1006.84px;">7.30</div>
<div class="t d c2" style="left:929px;top:1006.84px;">7.027</div>
<div class="t d c2" style="left:1050.2px;top:1006.84px;">2716.69</div>
<div class="t d c2" style="left:1171.4px;top:1006.84px;">2518.49</div>
<div class="t d c0" style="left:80.6px;top:1032px;">26</div>
<div class="t d c0" style="left:201.8px;top:1032px;">00:52:00</div>
<div class="t d c0" style="left:323px;top:1032px;">205.9</div>
<div class="t d c0" style="left:444.2px;top:1032px;">0.7070</div>
<div class="t d c1" style="left:565.4px;top:1032px;">126.5</div>
<div class="t d c1" style="left:686.6px;top:1032px;">0.461</div>
<div class="t d c2" style="left:807.8px;top:1032px;">7.59</div>
<div class="t d c2" style="left:929px;top:1032px;">7.050</div>
<div class="t d c2" style="left:1050.2px;top:1032px;">2796.27</div>
<div class="t d c2" style="left:1171.4px;top:1032px;">2583.97</div>
<div class="t d c0" style="left:80.6px;top:1057.16px;">27</div>
<div class="t d c0" style="left:201.8px;top:1057.16px;">00:54:00</div>
<div class="t d c0" style="left:323px;top:1057.16px;">208.9</div>
<div class="t d c0" style="left:444.2px;top:1057.16px;">0.7250</div>
<div class="t d c1" style="left:565.4px;top:1057.16px;">129.5</div>
<div class="t d c1" style="left:686.6px;top:1057.16px;">0.479</div>
<div class="t d c2" style="left:807.8px;top:1057.16px;">7.89</div>
<div class="t d c2" style="left:929px;top:1057.16px;">7.072</div>
<div class="t d c2" style="left:1050.2px;top:1057.16px;">2862.58</div>
<div class="t d c2" style="left:1171.4px;top:1057.16px;">2636.76</div>
<div class="t d c0" style="left:80.6px;top:1082.32px;">28</div>
<div class="t d c0" style="left:201.8px;top:1082.32px;">00:56:00</div>
<div class="t d c0" style="left:323px;top:1082.32px;">209.3</div>
<div class="t d c0" style="left:444.2px;top:1082.32px;">0.7430</div>
<div class="t d c1" style="left:565.4px;top:1082.32px;">129.9</div>
<div class="t d c1" style="left:686.6px;top:1082.32px;">0.497</div>
<div class="t d c2" style="left:807.8px;top:1082.32px;">8.19</div>
<div class="t d c2" style="left:929px;top:1082.32px;">7.095</div>
<div class="t d c2" style="left:1050.2px;top:1082.32px;">2871.42</div>
<div class="t d c2" style="left:1171.4px;top:1082.32px;">2636.39</div>
<div class="t d c0" style="left:80.6px;top:1107.48px;">29</div>
<div class="t d c0" style="left:201.8px;top:1107.48px;">00:58:00</div>
<div class="t d c0" style="left:323px;top:1107.48px;">210.3</div>
<div class="t d c0" style="left:444.2px;top:1107.48px;">0.7600</div>
<div class="t d c1" style="left:565.4px;top:1107.48px;">130.9</div>
<div class="t d c1" style="left:686.6px;top:1107.48px;">0.514</div>
<div class="t d c2" style="left:807.8px;top:1107.48px;">8.47</div>
<div class="t d c2" style="left:929px;top:1107.48px;">7.117</div>
<div class="t d c2" style="left:1050.2px;top:1107.48px;">2893.53</div>
<div class="t d c2" style="left:1171.4px;top:1107.48px;">2648.59</div>
<div class="t d c0" style="left:80.6px;top:1132.64px;">30</div>
<div class="t d c0" style="left:201.8px;top:1132.64px;">01:00:00</div>
<div class="t d c0" style="left:323px;top:1132.64px;">211.2</div>
<div class="t d c0" style="left:444.2px;top:1132.64px;">0.7770</div>
<div class="t d c1" style="left:565.4px;top:1132.64px;">131.8</div>
<div class="t d c1" style="left:686.6px;top:1132.64px;">0.531</div>
<div class="t d c2" style="left:807.8px;top:1132.64px;">8.75</div>
<div class="t d c2" style="left:929px;top:1132.64px;">7.139</div>
<div class="t d c2" style="left:1050.2px;top:1132.64px;">2913.42</div>
<div class="t d c2" style="left:1171.4px;top:1132.64px;">2658.64</div>
<div class="t d c0" style="left:80.6px;top:1157.8px;">31</div>
<div class="t d c0" style="left:201.8px;top:1157.8px;">01:02:00</div>
<div class="t d c0" style="left:323px;top:1157.8px;">211.0</div>
<div class="t d c0" style="left:444.2px;top:1157.8px;">0.7940</div>
<div class="t d c1" style="left:565.4px;top:1157.8px;">131.6</div>
<div class="t d c1" style="left:686.6px;top:1157.8px;">0.548</div>
<div class="t d c2" style="left:807.8px;top:1157.8px;">9.03</div>
<div class="t d c2" style="left:929px;top:1157.8px;">7.161</div>
<div class="t d c2" style="left:1050.2px;top:1157.8px;">2909.00</div>
<div class="t d c2" style="left:1171.4px;top:1157.8px;">2646.46</div>
<div class="t d c0" style="left:80.6px;top:1182.96px;">32</div>
<div class="t d c0" style="left:201.8px;top:1182.96px;">01:04:00</div>
<div class="t d c0" style="left:323px;top:1182.96px;">210.0</div>
<div class="t d c0" style="left:444.2px;top:1182.96px;">0.8120</div>
<div class="t d c1" style="left:565.4px;top:1182.96px;">130.6</div>
<div class="t d c1" style="left:686.6px;top:1182.96px;">0.566</div>
<div class="t d c2" style="left:807.8px;top:1182.96px;">9.32</div>
<div class="t d c2" style="left:929px;top:1182.96px;">7.184</div>
<div class="t d c2" style="left:1050.2px;top:1182.96px;">2886.90</div>
<div class="t d c2" style="left:1171.4px;top:1182.96px;">2617.80</div>
<div class="t d c0" style="left:80.6px;top:1208.12px;">33</div>
<div class="t d c0" style="left:201.8px;top:1208.12px;">01:06:00</div>
<div class="t d c0" style="left:323px;top:1208.12px;">209.5</div>
<div class="t d c0" style="left:444.2px;top:1208.12px;">0.8300</div>
<div class="t d c1" style="left:565.4px;top:1208.12px;">130.1</div>
<div class="t d c1" style="left:686.6px;top:1208.12px;">0.584</div>
<div class="t d c2" style="left:807.8px;top:1208.12px;">9.62</div>
<div class="t d c2" style="left:929px;top:1208.12px;">7.208</div>
<div class="t d c2" style="left:1050.2px;top:1208.12px;">2875.84</div>
<div class="t d c2" style="left:1171.4px;top:1208.12px;">2599.25</div>
<div class="t d c0" style="left:80.6px;top:1233.28px;">34</div>
<div class="t d c0" style="left:201.8px;top:1233.28px;">01:08:00</div>
<div class="t d c0" style="left:323px;top:1233.28px;">210.0</div>
<div class="t d c0" style="left:444.2px;top:1233.28px;">0.8470</div>
<div class="t d c1" style="left:565.4px;top:1233.28px;">130.6</div>
<div class="t d c1" style="left:686.6px;top:1233.28px;">0.601</div>
<div class="t d c2" style="left:807.8px;top:1233.28px;">9.90</div>
<div class="t d c2" style="left:929px;top:1233.28px;">7.230</div>
<div class="t d c2" style="left:1050.2px;top:1233.28px;">2886.90</div>
<div class="t d c2" style="left:1171.4px;top:1233.28px;">2601.15</div>
<div class="t d c0" style="left:80.6px;top:1258.44px;">35</div>
<div class="t d c0" style="left:201.8px;top:1258.44px;">01:10:00</div>
<div class="t d c0" style="left:323px;top:1258.44px;">211.9</div>
<div class="t d c0" style="left:444.2px;top:1258.44px;">0.8650</div>
<div class="t d c1" style="left:565.4px;top:1258.44px;">132.5</div>
<div class="t d c1" style="left:686.6px;top:1258.44px;">0.619</div>
<div class="t d c2" style="left:807.8px;top:1258.44px;">10.19</div>
<div class="t d c2" style="left:929px;top:1258.44px;">7.254</div>
<div class="t d c2" style="left:1050.2px;top:1258.44px;">2928.90</div>
<div class="t d c2" style="left:1171.4px;top:1258.44px;">2630.31</div>
<div class="t d c0" style="left:80.6px;top:1283.6px;">36</div>
<div class="t d c0" style="left:201.8px;top:1283.6px;">01:12:00</div>
<div class="t d c0" style="left:323px;top:1283.6px;">213.0</div>
<div class="t d c0" style="left:444.2px;top:1283.6px;">0.8830</div>
<div class="t d c1" style="left:565.4px;top:1283.6px;">133.6</div>
<div class="t d c1" style="left:686.6px;top:1283.6px;">0.637</div>
<div class="t d c2" style="left:807.8px;top:1283.6px;">10.49</div>
<div class="t d c2" style="left:929px;top:1283.6px;">7.278</div>
<div class="t d c2" style="left:1050.2px;top:1283.6px;">2953.21</div>
<div class="t d c2" style="left:1171.4px;top:1283.6px;">2643.40</div>
<div class="t d c0" style="left:80.6px;top:1308.76px;">37</div>
<div class="t d c0" style="left:201.8px;top:1308.76px;">01:14:00</div>
<div class="t d c0" style="left:323px;top:1308.76px;">214.5</div>
<div class="t d c0" style="left:444.2px;top:1308.76px;">0.9010</div>
<div class="t d c1" style="left:565.4px;top:1308.76px;">135.1</div>
<div class="t d c1" style="left:686.6px;top:1308.76px;">0.655</div>
<div class="t d c2" style="left:807.8px;top:1308.76px;">10.79</div>
<div class="t d c2" style="left:929px;top:1308.76px;">7.302</div>
<div class="t d c2" style="left:1050.2px;top:1308.76px;">2986.37</div>
<div class="t d c2" style="left:1171.4px;top:1308.76px;">2664.22</div>
</div></div>
<div style="left:0px;top:1328.8px;width:2308px;height:34px;background:#5a5a5a;"></div>
<div style="left:0px;top:1362.4px;width:2308px;height:29.6px;background:linear-gradient(#4c4c4c,#3a3a3a);"></div>
<div style="left:6.4px;top:1330px;width:105.6px;height:32px;background:linear-gradient(#f2f5f2,#dfe6df);border-radius:0 0 4px 4px;"></div>
<div class="tl" style="left:0;top:0;width:3508px;height:1788px;">
<div class="t" style="top:1338.68px;font-size:17.6px;line-height:17.6px;color:#2a9048;font-weight:bold;letter-spacing:-0.4px;left:59.6px;transform:translateX(-50%);">Specimen 1</div>
<div class="t" style="top:1339.4px;font-size:16.2px;line-height:16.2px;color:#3f7ac6;letter-spacing:-0.4px;left:167.2px;transform:translateX(-50%);">Specimen 2</div>
<div class="t" style="top:1339.4px;font-size:16.2px;line-height:16.2px;color:#b03a34;letter-spacing:-0.4px;left:279.2px;transform:translateX(-50%);">Specimen 3</div>
<div class="t" style="top:1339.4px;font-size:16.2px;line-height:16.2px;color:#c4ac64;letter-spacing:-0.4px;left:390px;transform:translateX(-50%);">Specimen 4</div>
<div class="t" style="top:1339.4px;font-size:16.2px;line-height:16.2px;color:#d6d6d6;letter-spacing:-0.4px;left:530px;transform:translateX(-50%);">Stress-Strain Graph</div>
</div>
</div>
<div style="left:0px;top:1391.2px;width:1201.6px;height:49.6px;background:#0a2b49;"></div>
<svg style="left:19.2px;top:1408px" width="19.2" height="19.2" viewBox="0 0 10 10"><path d="M0 1.4l4.3-0.6v4h-4.3zM5 0.7l5-0.7v4.8h-5zM0 5.5h4.3v4l-4.3-0.6zM5 5.5h5v4.5l-5-0.7z" fill="#f2f2f2"/></svg>
<svg style="left:75.6px;top:1406.8px" width="21.6" height="21.6" viewBox="-1 -1 12 12"><circle cx="5" cy="5" r="3.6" fill="none" stroke="#f6f6f6" stroke-width="2.4"/></svg>
<svg style="left:131.6px;top:1408.8px" width="24" height="17.6" viewBox="0 0 12 8.8"><rect x="2.2" y="0.8" width="7.6" height="7.2" rx="1.4" fill="none" stroke="#d4dce4" stroke-width="1.5"/><path d="M0.6 2v4.8M11.4 2v4.8" stroke="#d4dce4" stroke-width="1.2"/></svg>
<svg style="left:190.8px;top:1403.2px" width="26" height="28" viewBox="0 0 11.2 12"><path d="M0.8 6.4c0.2-3.4 2.4-5.6 5.2-5.6 3 0 4.6 2.2 4.6 5v1.2h-6.8c0.2 1.6 1.4 2.6 3.2 2.6 1.2 0 2.2-0.3 3.2-0.9v2.1c-1 0.6-2.2 0.9-3.6 0.9-3.2 0-5.2-2.2-5.2-5.1 0-1.9 1-3.5 2.6-4.3-0.6 0.8-0.8 1.5-0.9 2.3h4.6c0-1.3-0.8-2.1-2-2.1-2.2 0-4 1.5-4.9 3.9z" fill="#2f90e6" stroke="#2f90e6" stroke-width="0.5"/></svg>
<svg style="left:250.8px;top:1407.2px" width="24" height="20.8" viewBox="0 0 12 10.4"><path d="M0.4 0.8h4l1 1.2h6.2v8h-11.2z" fill="#f3d35c"/><path d="M0.4 3.6h11.2v6.4h-11.2z" fill="#f9e489"/><path d="M3 6.4h6v3.6h-6z" fill="#4aa0dc"/></svg>
<svg style="left:310px;top:1406.4px" width="24" height="22.4" viewBox="0 0 12 11.2"><rect x="5" y="1.8" width="6.6" height="7.6" fill="#3f8fdc"/><path d="M5.6 3l2.8 2.4 2.8-2.4" stroke="#d8ecfc" stroke-width="0.8" fill="none"/><rect x="0.4" y="0.8" width="6.6" height="9.6" fill="#1668c0"/><ellipse cx="3.7" cy="5.6" rx="1.7" ry="2.2" fill="none" stroke="#fff" stroke-width="1.1"/></svg>
<svg style="left:368px;top:1405.6px" width="24" height="24" viewBox="0 0 12 12"><path d="M8.6 0.4l3 1.3v8.6l-3 1.3-5-4.3-2.2 1.7-1-0.5v-5l1-0.5 2.2 1.7z" fill="#8a4cb8"/><path d="M8.6 3.6v4.8l-3-2.4zM1.6 4.6v2.8l1.4-1.4z" fill="#f0e6f8"/></svg>
<svg style="left:428px;top:1406.4px" width="22.4" height="22.4" viewBox="0 0 11.2 11.2"><rect x="0.4" y="0.4" width="10.4" height="10.4" fill="#e8a62c" stroke="#7a4a10" stroke-width="0.5"/><rect x="4.8" y="5.6" width="5" height="3.6" fill="#7a4a10" opacity="0.8"/><rect x="1.4" y="1.4" width="3.6" height="1.6" fill="#7a4a10" opacity="0.6"/></svg>
<svg style="left:487.2px;top:1406.4px" width="22.4" height="22.4" viewBox="0 0 11.2 11.2"><rect x="0.4" y="0.4" width="10.4" height="10.4" fill="#4cb648" stroke="#2f7a30" stroke-width="0.5"/><rect x="4.8" y="5.6" width="5" height="3.6" fill="#2f7a30" opacity="0.8"/><rect x="1.4" y="1.4" width="3.6" height="1.6" fill="#2f7a30" opacity="0.6"/></svg>
<svg style="left:546.8px;top:1406.4px" width="22.4" height="22.4" viewBox="0 0 11.2 11.2"><rect x="0.4" y="0.4" width="10.4" height="10.4" fill="#7a217c" stroke="#d070c8" stroke-width="0.5"/><rect x="4.8" y="5.6" width="5" height="3.6" fill="#d070c8" opacity="0.8"/><rect x="1.4" y="1.4" width="3.6" height="1.6" fill="#d070c8" opacity="0.6"/></svg>
<svg style="left:604.8px;top:1406.4px" width="22.4" height="22.4" viewBox="0 0 11.2 11.2"><rect x="0.4" y="0.4" width="10.4" height="10.4" fill="#c8c03a" stroke="#6a6418" stroke-width="0.5"/><rect x="4.8" y="5.6" width="5" height="3.6" fill="#6a6418" opacity="0.8"/><rect x="1.4" y="1.4" width="3.6" height="1.6" fill="#6a6418" opacity="0.6"/></svg>
<div style="left:181.2px;top:1436px;width:44.8px;height:2.4px;background:#7f9cb8;"></div>
<div style="left:240.4px;top:1436px;width:44.8px;height:2.4px;background:#7f9cb8;"></div>
<div style="left:299.6px;top:1436px;width:44.8px;height:2.4px;background:#7f9cb8;"></div>
<div style="left:357.6px;top:1436px;width:44.8px;height:2.4px;background:#7f9cb8;"></div>
<div style="left:416.8px;top:1436px;width:44.8px;height:2.4px;background:#7f9cb8;"></div>
<div style="left:476px;top:1436px;width:44.8px;height:2.4px;background:#7f9cb8;"></div>
<div style="left:535.6px;top:1436px;width:44.8px;height:2.4px;background:#7f9cb8;"></div>
<div style="left:593.6px;top:1436px;width:44.8px;height:2.4px;background:#7f9cb8;"></div>
<div class="w" style="left:0;top:0;width:3508px;height:1788px;clip-path:polygon(1201.2px 348.4px,3508px 348.4px,3508px 1788px,1201.2px 1788px);">
<div style="left:1201.2px;top:348.4px;width:2306.8px;height:1391.2px;background:#575757;"></div>
<div style="left:1201.2px;top:348.4px;width:2306.8px;height:27.2px;background:#ffffff;"></div>
<div style="left:1205.6px;top:353.2px;width:16px;height:15.6px;background:linear-gradient(#d6cc2c,#c2b81e);"></div>
<div style="left:1207.2px;top:361.6px;width:7.2px;height:5.2px;background:rgba(90,84,20,0.75);"></div>
<div style="left:1206.8px;top:354.8px;width:4px;height:3.6px;background:rgba(190,70,40,0.7);"></div>
<div style="left:3415.2px;top:356px;width:12px;height:12px;background:transparent;border:2px solid #a0a0a0;"></div>
<div style="left:1201.2px;top:375.6px;width:2306.8px;height:58px;background:#6b6b6b;"></div>
<svg style="left:1207.6px;top:379.6px" width="16" height="20.8" viewBox="0 0 8 10.4"><path d="M0.5 0.5h4.5l2.5 2.5v6.9h-7z" fill="#fafafa" stroke="#b8b8b8" stroke-width="0.8"/></svg>
<svg style="left:1231.6px;top:381.2px" width="19.2" height="17.6" viewBox="0 0 9.6 8.8"><path d="M0.4 1h3.2l1 1.2h4.6v6.2h-8.8z" fill="#e8b93c"/><path d="M0.4 8.4l1.6-4.4h7.4l-1.4 4.4z" fill="#f6d767"/></svg>
<svg style="left:1258.4px;top:379.6px" width="17.6" height="20.8" viewBox="0 0 8.8 10.4"><rect x="0.6" y="0.4" width="6.4" height="8.6" fill="#dcdcf4" stroke="#7a6aa8" stroke-width="0.8"/><rect x="1.6" y="1.4" width="4.2" height="3" fill="#5a4a9a"/><path d="M5 6l3 3.6" stroke="#c8a23c" stroke-width="1.6"/></svg>
<svg style="left:1283.6px;top:379.2px" width="22.4" height="21.6" viewBox="0 0 11.2 10.8"><rect x="3" y="0.4" width="5.2" height="3.4" fill="#f4f4f4" stroke="#9aa0a8" stroke-width="0.6"/><rect x="0.6" y="3.2" width="10" height="4.6" rx="1" fill="#c9d2dc" stroke="#8894a2" stroke-width="0.6"/><rect x="2.8" y="6.4" width="5.6" height="3.8" fill="#ffffff" stroke="#6a98c8" stroke-width="0.6"/></svg>
<div style="left:1310.4px;top:379.6px;width:2px;height:20px;background:#8a8a8a;"></div>
<svg style="left:1318px;top:387.6px" width="9.6" height="6.4" viewBox="0 0 6 4"><path d="M0 0h6l-3 4z" fill="#3a3a3a"/></svg>
<div style="left:1201.2px;top:404px;width:66px;height:29.2px;background:linear-gradient(#2a6cc4,#174f9e);border-radius:3.2px 3.2px 0 0;"></div>
<svg style="left:1249.2px;top:416.4px" width="8.8" height="5.2" viewBox="0 0 6 4"><path d="M0 0h6l-3 4z" fill="#fff"/></svg>
<div style="left:1476.4px;top:404.8px;width:72.4px;height:28.8px;background:linear-gradient(#e6e6e6,#d4d4d4);border-radius:4px 4px 0 0;"></div>
<div style="left:1201.2px;top:433.6px;width:2306.8px;height:117.6px;background:linear-gradient(#d4d4d4 0,#c4c4c4 35%,#b0b0b0 70%,#a2a2a2 100%);"></div>
<svg style="left:1222.8px;top:439.6px" width="37.6" height="37.6" viewBox="0 0 24 24"><circle cx="12" cy="12" r="6" fill="#d4d4d4"/><circle cx="12" cy="12" r="8.5" fill="none" stroke="#3f8de0" stroke-width="5.2"/><path d="M7.7 4.7a8.5 8.5 0 0 0-1.7 13.3" fill="none" stroke="#e24a36" stroke-width="5.2"/><path d="M12 3.5a8.5 8.5 0 0 0-4.3 1.2" fill="none" stroke="#f6c93c" stroke-width="5.2"/></svg>
<div style="left:1282px;top:445.6px;width:2px;height:68px;background:rgba(120,120,120,0.55);"></div>
<div style="left:1284px;top:445.6px;width:2px;height:68px;background:rgba(240,240,240,0.55);"></div>
<svg style="left:1295.2px;top:442.8px" width="32.8" height="32.8" viewBox="0 0 24 24"><rect x="2" y="2" width="20" height="20" rx="1.5" fill="#e0584c" stroke="#b8362c" stroke-width="1.2"/><rect x="3.5" y="3.5" width="17" height="7" fill="#ec7a70" opacity="0.7"/><path d="M7.5 7.5l9 9M16.5 7.5l-9 9" stroke="#fff" stroke-width="3"/></svg>
<div style="left:1341.2px;top:436.8px;width:2px;height:114px;background:#9a9a9a;"></div>
<div style="left:1343.2px;top:436.8px;width:2px;height:114px;background:#d8d8d8;"></div>
<div style="left:1355.2px;top:448.8px;width:12.8px;height:12.8px;background:#f2f2f2;border:1.6px solid #b4b4b4;"></div>
<div style="left:1355.2px;top:477.2px;width:12.8px;height:12.8px;background:#f2f2f2;border:1.6px solid #b4b4b4;"></div>
<svg style="left:1356.8px;top:478.8px" width="9.6" height="9.6" viewBox="0 0 6 6"><path d="M0.8 3l1.7 2 2.8-4.2" stroke="#555" stroke-width="1.2" fill="none"/></svg>
<div style="left:1355.2px;top:505.2px;width:12.8px;height:12.8px;background:#f2f2f2;border:1.6px solid #b4b4b4;"></div>
<svg style="left:1356.8px;top:506.8px" width="9.6" height="9.6" viewBox="0 0 6 6"><path d="M0.8 3l1.7 2 2.8-4.2" stroke="#555" stroke-width="1.2" fill="none"/></svg>
<div style="left:1495.6px;top:477.2px;width:12.8px;height:12.8px;background:#f2f2f2;border:1.6px solid #b4b4b4;"></div>
<svg style="left:1622px;top:440.4px" width="36" height="36" viewBox="0 0 24 24"><circle cx="14.5" cy="8.5" r="6.5" fill="#e6e6e6" stroke="#bdbdbd" stroke-width="1.8"/><path d="M10 13.5l-7.5 8.5" stroke="#b8b8b8" stroke-width="2.8"/></svg>
<svg style="left:1687.2px;top:441.6px" width="33.6" height="33.6" viewBox="0 0 24 24"><rect x="2" y="1.5" width="19" height="21" fill="#f4f8fc" stroke="#9fb4cc" stroke-width="1"/><rect x="4.5" y="4" width="14" height="14" fill="#d6e6f6" stroke="#3f6fc0" stroke-width="1.4" stroke-dasharray="2 1.2"/><rect x="7.5" y="7" width="8" height="8" fill="#b8d0ee"/><path d="M13 13l8 8" stroke="#5a6a80" stroke-width="2"/></svg>
<div style="left:1734.8px;top:445.6px;width:2px;height:68px;background:rgba(120,120,120,0.55);"></div>
<div style="left:1736.8px;top:445.6px;width:2px;height:68px;background:rgba(240,240,240,0.55);"></div>
<svg style="left:1765.2px;top:441.6px" width="34.4" height="33.6" viewBox="0 0 24 24"><path d="M3 10l3-7h4l1 7zM21 10l-3-7h-4l-1 7z" fill="#3f6fc8"/><rect x="1" y="9" width="9.5" height="12" rx="3.5" fill="#2f5fb8"/><rect x="13.5" y="9" width="9.5" height="12" rx="3.5" fill="#2f5fb8"/><rect x="10" y="8" width="4" height="6" fill="#5a86d8"/><rect x="2.5" y="11" width="3" height="7" rx="1.5" fill="#86acec"/><rect x="15" y="11" width="3" height="7" rx="1.5" fill="#86acec"/></svg>
<div style="left:1832.8px;top:445.6px;width:2px;height:68px;background:rgba(120,120,120,0.55);"></div>
<div style="left:1834.8px;top:445.6px;width:2px;height:68px;background:rgba(240,240,240,0.55);"></div>
<svg style="left:1852.8px;top:441.6px" width="30.4" height="33.6" viewBox="0 0 24 24"><path d="M4 1h12l4 4v18h-16z" fill="#f4f8fc" stroke="#a8b8cc" stroke-width="1"/><path d="M16 1v4h4" fill="#dfe6f0" stroke="#a8b8cc" stroke-width="0.8"/><path d="M8 9h8l-2.5-2.5M16 16h-8l2.5 2.5" stroke="#2fa84a" stroke-width="2.4" fill="none"/><path d="M16 9c1 2 0.5 4-1 5.5M8 16c-1-2-0.5-4 1-5.5" stroke="#2fa84a" stroke-width="2" fill="none"/></svg>
<div style="left:1906.8px;top:436.8px;width:2px;height:114px;background:#9a9a9a;"></div>
<div style="left:1908.8px;top:436.8px;width:2px;height:114px;background:#d8d8d8;"></div>
<div style="left:2013.6px;top:436.8px;width:2px;height:114px;background:#9a9a9a;"></div>
<div style="left:2015.6px;top:436.8px;width:2px;height:114px;background:#d8d8d8;"></div>
<div style="left:1201.2px;top:551.2px;width:2306.8px;height:6.4px;background:linear-gradient(#7c7c7c,#5e5e5e);"></div>
<div style="left:1201.2px;top:557.6px;width:4px;height:1182px;background:#616161;"></div>
<div style="left:1857.2px;top:648.8px;width:999.2px;height:996.4px;background:#ffffff;border-radius:4.8px;"></div>
<svg style="left:0;top:0" width="3508" height="1788" viewBox="0 0 877 447"><path d="M515.25 172.2V359.4" stroke="#e6e6e6" stroke-width="0.5"/><path d="M496.5 340.68H684" stroke="#e6e6e6" stroke-width="0.5"/><path d="M534 172.2V359.4" stroke="#e6e6e6" stroke-width="0.5"/><path d="M496.5 321.96H684" stroke="#e6e6e6" stroke-width="0.5"/><path d="M552.75 172.2V359.4" stroke="#e6e6e6" stroke-width="0.5"/><path d="M496.5 303.24H684" stroke="#e6e6e6" stroke-width="0.5"/><path d="M571.5 172.2V359.4" stroke="#e6e6e6" stroke-width="0.5"/><path d="M496.5 284.52H684" stroke="#e6e6e6" stroke-width="0.5"/><path d="M590.25 172.2V359.4" stroke="#e6e6e6" stroke-width="0.5"/><path d="M496.5 265.8H684" stroke="#e6e6e6" stroke-width="0.5"/><path d="M609 172.2V359.4" stroke="#e6e6e6" stroke-width="0.5"/><path d="M496.5 247.08H684" stroke="#e6e6e6" stroke-width="0.5"/><path d="M627.75 172.2V359.4" stroke="#e6e6e6" stroke-width="0.5"/><path d="M496.5 228.36H684" stroke="#e6e6e6" stroke-width="0.5"/><path d="M646.5 172.2V359.4" stroke="#e6e6e6" stroke-width="0.5"/><path d="M496.5 209.64H684" stroke="#e6e6e6" stroke-width="0.5"/><path d="M665.25 172.2V359.4" stroke="#e6e6e6" stroke-width="0.5"/><path d="M496.5 190.92H684" stroke="#e6e6e6" stroke-width="0.5"/><path d="M684 172.2V359.4" stroke="#e6e6e6" stroke-width="0.5"/><path d="M496.5 172.2H684" stroke="#e6e6e6" stroke-width="0.5"/><path d="M496.5 359.4C496.97 358.01 498.39 355.97 499.31 351.09C500.23 346.21 501.11 339.27 502.03 330.1C502.95 320.94 503.94 304.86 504.84 296.11C505.75 287.36 506.56 282.85 507.47 277.61C508.38 272.36 509.36 268.79 510.28 264.65C511.2 260.52 512.08 256.06 513 252.8C513.92 249.54 514.91 247.62 515.81 245.1C516.72 242.59 517.53 239.93 518.44 237.73C519.34 235.52 520.34 233.29 521.25 231.86C522.16 230.44 522.98 230.41 523.88 229.2C524.77 227.98 525.7 226.12 526.59 224.55C527.48 222.98 528.3 221.18 529.22 219.77C530.14 218.36 531.2 217.5 532.12 216.07C533.05 214.64 533.84 212.63 534.75 211.2C535.66 209.78 536.62 209.11 537.56 207.53C538.5 205.96 539.45 203.28 540.38 201.76C541.3 200.25 542.17 199.37 543.09 198.43C544.02 197.49 545 196.84 545.91 196.12C546.81 195.39 547.62 194.37 548.53 194.07C549.44 193.77 550.44 194.44 551.34 194.31C552.25 194.17 553.09 193.1 553.97 193.26C554.84 193.42 555.7 195.12 556.59 195.29C557.48 195.46 558.39 194.11 559.31 194.28C560.23 194.45 561.19 197.07 562.12 196.33C563.06 195.58 564.02 191.63 564.94 189.81C565.86 187.99 566.73 186.73 567.66 185.4C568.58 184.07 569.53 182.43 570.47 181.85C571.41 181.26 572.38 182 573.28 181.87C574.19 181.74 575.03 181.3 575.91 181.05C576.78 180.8 577.66 180.35 578.53 180.37C579.41 180.4 580.27 180.73 581.16 181.19C582.05 181.65 582.95 182.59 583.88 183.12C584.8 183.65 585.78 184.18 586.69 184.37C587.59 184.56 588.42 184.59 589.31 184.24C590.2 183.89 591.11 182.75 592.03 182.28C592.95 181.81 593.91 181.78 594.84 181.4C595.78 181.02 596.76 180.95 597.66 180C598.55 179.04 599.35 176.49 600.23 175.66C601.1 174.83 601.98 175.43 602.89 175.04C603.8 174.64 604.8 173.78 605.71 173.31C606.62 172.84 607.48 171.96 608.37 172.22C609.26 172.48 610.12 174.3 611.03 174.88C611.95 175.45 612.94 174.88 613.85 175.66C614.77 176.44 615.65 178.72 616.52 179.58C617.38 180.44 618.16 180.52 619.02 180.83C619.88 181.14 620.77 181.61 621.68 181.46C622.6 181.3 623.59 180.52 624.5 179.89C625.42 179.26 626.25 178.35 627.17 177.7C628.08 177.05 629.07 176.18 629.98 175.97C630.9 175.77 631.73 176.76 632.65 176.44C633.56 176.13 634.53 174.3 635.47 174.1C636.41 173.89 637.37 174.93 638.29 175.19C639.2 175.45 640.06 174.93 640.95 175.66C641.84 176.39 642.72 178.66 643.61 179.58C644.5 180.49 645.39 180.83 646.27 181.14C647.16 181.46 648.02 181.12 648.94 181.46C649.85 181.8 650.81 182.94 651.75 183.18C652.69 183.41 653.66 183.21 654.57 182.87C655.49 182.53 656.32 181.69 657.24 181.14C658.15 180.6 659.12 179.97 660.05 179.58C660.99 179.19 661.93 178.98 662.87 178.79C663.81 178.61 664.78 178.3 665.69 178.48C666.61 178.66 667.44 179.32 668.36 179.89C669.27 180.46 670.26 181.67 671.17 181.93C672.09 182.19 672.92 181.14 673.84 181.46C674.75 181.77 675.74 183.13 676.66 183.81C677.57 184.48 678.41 185.01 679.32 185.53C680.23 186.05 681.67 186.7 682.14 186.94" fill="none" stroke="#1c9651" stroke-width="1"/><rect x="495.55" y="358.45" width="1.9" height="1.9" fill="#14703a"/><rect x="498.36" y="350.14" width="1.9" height="1.9" fill="#14703a"/><rect x="501.08" y="329.15" width="1.9" height="1.9" fill="#14703a"/><rect x="503.89" y="295.16" width="1.9" height="1.9" fill="#14703a"/><rect x="506.52" y="276.66" width="1.9" height="1.9" fill="#14703a"/><rect x="509.33" y="263.7" width="1.9" height="1.9" fill="#14703a"/><rect x="512.05" y="251.85" width="1.9" height="1.9" fill="#14703a"/><rect x="514.86" y="244.15" width="1.9" height="1.9" fill="#14703a"/><rect x="517.49" y="236.78" width="1.9" height="1.9" fill="#14703a"/><rect x="520.3" y="230.91" width="1.9" height="1.9" fill="#14703a"/><rect x="522.92" y="228.25" width="1.9" height="1.9" fill="#14703a"/><rect x="525.64" y="223.6" width="1.9" height="1.9" fill="#14703a"/><rect x="528.27" y="218.82" width="1.9" height="1.9" fill="#14703a"/><rect x="531.17" y="215.12" width="1.9" height="1.9" fill="#14703a"/><rect x="533.8" y="210.25" width="1.9" height="1.9" fill="#14703a"/><rect x="536.61" y="206.58" width="1.9" height="1.9" fill="#14703a"/><rect x="539.42" y="200.81" width="1.9" height="1.9" fill="#14703a"/><rect x="542.14" y="197.48" width="1.9" height="1.9" fill="#14703a"/><rect x="544.96" y="195.17" width="1.9" height="1.9" fill="#14703a"/><rect x="547.58" y="193.12" width="1.9" height="1.9" fill="#14703a"/><rect x="550.39" y="193.36" width="1.9" height="1.9" fill="#14703a"/><rect x="553.02" y="192.31" width="1.9" height="1.9" fill="#14703a"/><rect x="555.64" y="194.34" width="1.9" height="1.9" fill="#14703a"/><rect x="558.36" y="193.33" width="1.9" height="1.9" fill="#14703a"/><rect x="561.17" y="195.38" width="1.9" height="1.9" fill="#14703a"/><rect x="563.99" y="188.86" width="1.9" height="1.9" fill="#14703a"/><rect x="566.71" y="184.45" width="1.9" height="1.9" fill="#14703a"/><rect x="569.52" y="180.9" width="1.9" height="1.9" fill="#14703a"/><rect x="572.33" y="180.92" width="1.9" height="1.9" fill="#14703a"/><rect x="574.96" y="180.1" width="1.9" height="1.9" fill="#14703a"/><rect x="577.58" y="179.42" width="1.9" height="1.9" fill="#14703a"/><rect x="580.21" y="180.24" width="1.9" height="1.9" fill="#14703a"/><rect x="582.92" y="182.17" width="1.9" height="1.9" fill="#14703a"/><rect x="585.74" y="183.42" width="1.9" height="1.9" fill="#14703a"/><rect x="588.36" y="183.29" width="1.9" height="1.9" fill="#14703a"/><rect x="591.08" y="181.33" width="1.9" height="1.9" fill="#14703a"/><rect x="593.89" y="180.45" width="1.9" height="1.9" fill="#14703a"/><rect x="596.71" y="179.05" width="1.9" height="1.9" fill="#14703a"/><rect x="599.28" y="174.71" width="1.9" height="1.9" fill="#14703a"/><rect x="601.94" y="174.09" width="1.9" height="1.9" fill="#14703a"/><rect x="604.76" y="172.36" width="1.9" height="1.9" fill="#14703a"/><rect x="607.42" y="171.27" width="1.9" height="1.9" fill="#14703a"/><rect x="610.08" y="173.93" width="1.9" height="1.9" fill="#14703a"/><rect x="612.9" y="174.71" width="1.9" height="1.9" fill="#14703a"/><rect x="615.57" y="178.63" width="1.9" height="1.9" fill="#14703a"/><rect x="618.07" y="179.88" width="1.9" height="1.9" fill="#14703a"/><rect x="620.73" y="180.51" width="1.9" height="1.9" fill="#14703a"/><rect x="623.55" y="178.94" width="1.9" height="1.9" fill="#14703a"/><rect x="626.22" y="176.75" width="1.9" height="1.9" fill="#14703a"/><rect x="629.03" y="175.02" width="1.9" height="1.9" fill="#14703a"/><rect x="631.7" y="175.49" width="1.9" height="1.9" fill="#14703a"/><rect x="634.52" y="173.15" width="1.9" height="1.9" fill="#14703a"/><rect x="637.34" y="174.24" width="1.9" height="1.9" fill="#14703a"/><rect x="640" y="174.71" width="1.9" height="1.9" fill="#14703a"/><rect x="642.66" y="178.63" width="1.9" height="1.9" fill="#14703a"/><rect x="645.32" y="180.19" width="1.9" height="1.9" fill="#14703a"/><rect x="647.99" y="180.51" width="1.9" height="1.9" fill="#14703a"/><rect x="650.8" y="182.23" width="1.9" height="1.9" fill="#14703a"/><rect x="653.62" y="181.92" width="1.9" height="1.9" fill="#14703a"/><rect x="656.29" y="180.19" width="1.9" height="1.9" fill="#14703a"/><rect x="659.1" y="178.63" width="1.9" height="1.9" fill="#14703a"/><rect x="661.92" y="177.84" width="1.9" height="1.9" fill="#14703a"/><rect x="664.74" y="177.53" width="1.9" height="1.9" fill="#14703a"/><rect x="667.41" y="178.94" width="1.9" height="1.9" fill="#14703a"/><rect x="670.22" y="180.98" width="1.9" height="1.9" fill="#14703a"/><rect x="672.89" y="180.51" width="1.9" height="1.9" fill="#14703a"/><rect x="675.71" y="182.86" width="1.9" height="1.9" fill="#14703a"/><rect x="678.37" y="184.58" width="1.9" height="1.9" fill="#14703a"/><rect x="681.19" y="185.99" width="1.9" height="1.9" fill="#14703a"/><path d="M496.5 171.7V359.4H684.5" fill="none" stroke="#222" stroke-width="0.7"/><path d="M494.5 359.4H496.5" stroke="#222" stroke-width="0.6"/><path d="M496.5 359.4V361.4" stroke="#222" stroke-width="0.6"/><path d="M494.5 340.68H496.5" stroke="#222" stroke-width="0.6"/><path d="M515.25 359.4V361.4" stroke="#222" stroke-width="0.6"/><path d="M494.5 321.96H496.5" stroke="#222" stroke-width="0.6"/><path d="M534 359.4V361.4" stroke="#222" stroke-width="0.6"/><path d="M494.5 303.24H496.5" stroke="#222" stroke-width="0.6"/><path d="M552.75 359.4V361.4" stroke="#222" stroke-width="0.6"/><path d="M494.5 284.52H496.5" stroke="#222" stroke-width="0.6"/><path d="M571.5 359.4V361.4" stroke="#222" stroke-width="0.6"/><path d="M494.5 265.8H496.5" stroke="#222" stroke-width="0.6"/><path d="M590.25 359.4V361.4" stroke="#222" stroke-width="0.6"/><path d="M494.5 247.08H496.5" stroke="#222" stroke-width="0.6"/><path d="M609 359.4V361.4" stroke="#222" stroke-width="0.6"/><path d="M494.5 228.36H496.5" stroke="#222" stroke-width="0.6"/><path d="M627.75 359.4V361.4" stroke="#222" stroke-width="0.6"/><path d="M494.5 209.64H496.5" stroke="#222" stroke-width="0.6"/><path d="M646.5 359.4V361.4" stroke="#222" stroke-width="0.6"/><path d="M494.5 190.92H496.5" stroke="#222" stroke-width="0.6"/><path d="M665.25 359.4V361.4" stroke="#222" stroke-width="0.6"/><path d="M494.5 172.2H496.5" stroke="#222" stroke-width="0.6"/><path d="M684 359.4V361.4" stroke="#222" stroke-width="0.6"/><path d="M495.5 354.72H496.5" stroke="#444" stroke-width="0.4"/><path d="M501.19 359.4V360.4" stroke="#444" stroke-width="0.4"/><path d="M495.5 350.04H496.5" stroke="#444" stroke-width="0.4"/><path d="M505.88 359.4V360.4" stroke="#444" stroke-width="0.4"/><path d="M495.5 345.36H496.5" stroke="#444" stroke-width="0.4"/><path d="M510.56 359.4V360.4" stroke="#444" stroke-width="0.4"/><path d="M495.5 336H496.5" stroke="#444" stroke-width="0.4"/><path d="M519.94 359.4V360.4" stroke="#444" stroke-width="0.4"/><path d="M495.5 331.32H496.5" stroke="#444" stroke-width="0.4"/><path d="M524.62 359.4V360.4" stroke="#444" stroke-width="0.4"/><path d="M495.5 326.64H496.5" stroke="#444" stroke-width="0.4"/><path d="M529.31 359.4V360.4" stroke="#444" stroke-width="0.4"/><path d="M495.5 317.28H496.5" stroke="#444" stroke-width="0.4"/><path d="M538.69 359.4V360.4" stroke="#444" stroke-width="0.4"/><path d="M495.5 312.6H496.5" stroke="#444" stroke-width="0.4"/><path d="M543.38 359.4V360.4" stroke="#444" stroke-width="0.4"/><path d="M495.5 307.92H496.5" stroke="#444" stroke-width="0.4"/><path d="M548.06 359.4V360.4" stroke="#444" stroke-width="0.4"/><path d="M495.5 298.56H496.5" stroke="#444" stroke-width="0.4"/><path d="M557.44 359.4V360.4" stroke="#444" stroke-width="0.4"/><path d="M495.5 293.88H496.5" stroke="#444" stroke-width="0.4"/><path d="M562.12 359.4V360.4" stroke="#444" stroke-width="0.4"/><path d="M495.5 289.2H496.5" stroke="#444" stroke-width="0.4"/><path d="M566.81 359.4V360.4" stroke="#444" stroke-width="0.4"/><path d="M495.5 279.84H496.5" stroke="#444" stroke-width="0.4"/><path d="M576.19 359.4V360.4" stroke="#444" stroke-width="0.4"/><path d="M495.5 275.16H496.5" stroke="#444" stroke-width="0.4"/><path d="M580.88 359.4V360.4" stroke="#444" stroke-width="0.4"/><path d="M495.5 270.48H496.5" stroke="#444" stroke-width="0.4"/><path d="M585.56 359.4V360.4" stroke="#444" stroke-width="0.4"/><path d="M495.5 261.12H496.5" stroke="#444" stroke-width="0.4"/><path d="M594.94 359.4V360.4" stroke="#444" stroke-width="0.4"/><path d="M495.5 256.44H496.5" stroke="#444" stroke-width="0.4"/><path d="M599.62 359.4V360.4" stroke="#444" stroke-width="0.4"/><path d="M495.5 251.76H496.5" stroke="#444" stroke-width="0.4"/><path d="M604.31 359.4V360.4" stroke="#444" stroke-width="0.4"/><path d="M495.5 242.4H496.5" stroke="#444" stroke-width="0.4"/><path d="M613.69 359.4V360.4" stroke="#444" stroke-width="0.4"/><path d="M495.5 237.72H496.5" stroke="#444" stroke-width="0.4"/><path d="M618.38 359.4V360.4" stroke="#444" stroke-width="0.4"/><path d="M495.5 233.04H496.5" stroke="#444" stroke-width="0.4"/><path d="M623.06 359.4V360.4" stroke="#444" stroke-width="0.4"/><path d="M495.5 223.68H496.5" stroke="#444" stroke-width="0.4"/><path d="M632.44 359.4V360.4" stroke="#444" stroke-width="0.4"/><path d="M495.5 219H496.5" stroke="#444" stroke-width="0.4"/><path d="M637.12 359.4V360.4" stroke="#444" stroke-width="0.4"/><path d="M495.5 214.32H496.5" stroke="#444" stroke-width="0.4"/><path d="M641.81 359.4V360.4" stroke="#444" stroke-width="0.4"/><path d="M495.5 204.96H496.5" stroke="#444" stroke-width="0.4"/><path d="M651.19 359.4V360.4" stroke="#444" stroke-width="0.4"/><path d="M495.5 200.28H496.5" stroke="#444" stroke-width="0.4"/><path d="M655.88 359.4V360.4" stroke="#444" stroke-width="0.4"/><path d="M495.5 195.6H496.5" stroke="#444" stroke-width="0.4"/><path d="M660.56 359.4V360.4" stroke="#444" stroke-width="0.4"/><path d="M495.5 186.24H496.5" stroke="#444" stroke-width="0.4"/><path d="M669.94 359.4V360.4" stroke="#444" stroke-width="0.4"/><path d="M495.5 181.56H496.5" stroke="#444" stroke-width="0.4"/><path d="M674.62 359.4V360.4" stroke="#444" stroke-width="0.4"/><path d="M495.5 176.88H496.5" stroke="#444" stroke-width="0.4"/><path d="M679.31 359.4V360.4" stroke="#444" stroke-width="0.4"/></svg>
<div style="left:1201.2px;top:1677.6px;width:2306.8px;height:2px;background:#7a7a7a;"></div>
<div style="left:1201.2px;top:1679.6px;width:2306.8px;height:32px;background:#5a5a5a;"></div>
<div style="left:1201.2px;top:1711.2px;width:2306.8px;height:28.4px;background:linear-gradient(#4e4e4e,#3c3c3c);"></div>
<div style="left:1656px;top:1678.8px;width:163.2px;height:31.2px;background:linear-gradient(#e8e8e8,#d6d6d6);border-radius:0 0 4.8px 4.8px;"></div>
<div style="left:1201.2px;top:1739.6px;width:2306.8px;height:48.8px;background:#0a2b49;"></div>
<svg style="left:1220.4px;top:1756.4px" width="19.2" height="19.2" viewBox="0 0 10 10"><path d="M0 1.4l4.3-0.6v4h-4.3zM5 0.7l5-0.7v4.8h-5zM0 5.5h4.3v4l-4.3-0.6zM5 5.5h5v4.5l-5-0.7z" fill="#f2f2f2"/></svg>
<svg style="left:1276.8px;top:1755.2px" width="21.6" height="21.6" viewBox="-1 -1 12 12"><circle cx="5" cy="5" r="3.6" fill="none" stroke="#f6f6f6" stroke-width="2.4"/></svg>
<svg style="left:1332.8px;top:1757.2px" width="24" height="17.6" viewBox="0 0 12 8.8"><rect x="2.2" y="0.8" width="7.6" height="7.2" rx="1.4" fill="none" stroke="#d4dce4" stroke-width="1.5"/><path d="M0.6 2v4.8M11.4 2v4.8" stroke="#d4dce4" stroke-width="1.2"/></svg>
<svg style="left:1392px;top:1751.6px" width="26" height="28" viewBox="0 0 11.2 12"><path d="M0.8 6.4c0.2-3.4 2.4-5.6 5.2-5.6 3 0 4.6 2.2 4.6 5v1.2h-6.8c0.2 1.6 1.4 2.6 3.2 2.6 1.2 0 2.2-0.3 3.2-0.9v2.1c-1 0.6-2.2 0.9-3.6 0.9-3.2 0-5.2-2.2-5.2-5.1 0-1.9 1-3.5 2.6-4.3-0.6 0.8-0.8 1.5-0.9 2.3h4.6c0-1.3-0.8-2.1-2-2.1-2.2 0-4 1.5-4.9 3.9z" fill="#2f90e6" stroke="#2f90e6" stroke-width="0.5"/></svg>
<svg style="left:1452px;top:1755.6px" width="24" height="20.8" viewBox="0 0 12 10.4"><path d="M0.4 0.8h4l1 1.2h6.2v8h-11.2z" fill="#f3d35c"/><path d="M0.4 3.6h11.2v6.4h-11.2z" fill="#f9e489"/><path d="M3 6.4h6v3.6h-6z" fill="#4aa0dc"/></svg>
<svg style="left:1511.2px;top:1754.8px" width="24" height="22.4" viewBox="0 0 12 11.2"><rect x="5" y="1.8" width="6.6" height="7.6" fill="#3f8fdc"/><path d="M5.6 3l2.8 2.4 2.8-2.4" stroke="#d8ecfc" stroke-width="0.8" fill="none"/><rect x="0.4" y="0.8" width="6.6" height="9.6" fill="#1668c0"/><ellipse cx="3.7" cy="5.6" rx="1.7" ry="2.2" fill="none" stroke="#fff" stroke-width="1.1"/></svg>
<svg style="left:1569.2px;top:1754px" width="24" height="24" viewBox="0 0 12 12"><path d="M8.6 0.4l3 1.3v8.6l-3 1.3-5-4.3-2.2 1.7-1-0.5v-5l1-0.5 2.2 1.7z" fill="#8a4cb8"/><path d="M8.6 3.6v4.8l-3-2.4zM1.6 4.6v2.8l1.4-1.4z" fill="#f0e6f8"/></svg>
<svg style="left:1629.2px;top:1754.8px" width="22.4" height="22.4" viewBox="0 0 11.2 11.2"><rect x="0.4" y="0.4" width="10.4" height="10.4" fill="#e8a62c" stroke="#7a4a10" stroke-width="0.5"/><rect x="4.8" y="5.6" width="5" height="3.6" fill="#7a4a10" opacity="0.8"/><rect x="1.4" y="1.4" width="3.6" height="1.6" fill="#7a4a10" opacity="0.6"/></svg>
<svg style="left:1688.4px;top:1754.8px" width="22.4" height="22.4" viewBox="0 0 11.2 11.2"><rect x="0.4" y="0.4" width="10.4" height="10.4" fill="#4cb648" stroke="#2f7a30" stroke-width="0.5"/><rect x="4.8" y="5.6" width="5" height="3.6" fill="#2f7a30" opacity="0.8"/><rect x="1.4" y="1.4" width="3.6" height="1.6" fill="#2f7a30" opacity="0.6"/></svg>
<svg style="left:1748px;top:1754.8px" width="22.4" height="22.4" viewBox="0 0 11.2 11.2"><rect x="0.4" y="0.4" width="10.4" height="10.4" fill="#7a217c" stroke="#d070c8" stroke-width="0.5"/><rect x="4.8" y="5.6" width="5" height="3.6" fill="#d070c8" opacity="0.8"/><rect x="1.4" y="1.4" width="3.6" height="1.6" fill="#d070c8" opacity="0.6"/></svg>
<svg style="left:1806px;top:1754.8px" width="22.4" height="22.4" viewBox="0 0 11.2 11.2"><rect x="0.4" y="0.4" width="10.4" height="10.4" fill="#c8c03a" stroke="#6a6418" stroke-width="0.5"/><rect x="4.8" y="5.6" width="5" height="3.6" fill="#6a6418" opacity="0.8"/><rect x="1.4" y="1.4" width="3.6" height="1.6" fill="#6a6418" opacity="0.6"/></svg>
<div style="left:1382.4px;top:1784.4px;width:44.8px;height:2.4px;background:#7f9cb8;"></div>
<div style="left:1441.6px;top:1784.4px;width:44.8px;height:2.4px;background:#7f9cb8;"></div>
<div style="left:1500.8px;top:1784.4px;width:44.8px;height:2.4px;background:#7f9cb8;"></div>
<div style="left:1558.8px;top:1784.4px;width:44.8px;height:2.4px;background:#7f9cb8;"></div>
<div style="left:1618px;top:1784.4px;width:44.8px;height:2.4px;background:#7f9cb8;"></div>
<div style="left:1677.2px;top:1784.4px;width:44.8px;height:2.4px;background:#7f9cb8;"></div>
<div style="left:1736.8px;top:1784.4px;width:44.8px;height:2.4px;background:#7f9cb8;"></div>
<div style="left:1794.8px;top:1784.4px;width:44.8px;height:2.4px;background:#7f9cb8;"></div>
<div class="tl" style="left:0;top:0;width:3508px;height:1788px;">
<div class="t" style="top:354.12px;font-size:15.6px;line-height:15.6px;color:#a2a2a2;letter-spacing:-0.76px;left:1228.8px;">UC_SampleTest1.hsdn - Unconfined Compression Test</div>
<div class="t" style="top:352.84px;font-size:18px;line-height:18px;color:#a0a0a0;left:3367.2px;transform:translateX(-50%);">&#8211;</div>
<div class="t" style="top:350.12px;font-size:22.4px;line-height:22.4px;color:#a0a0a0;left:3477.6px;transform:translateX(-50%);">&#215;</div>
<div class="t" style="top:409.48px;font-size:17.6px;line-height:17.6px;color:#ffffff;font-weight:bold;letter-spacing:-0.2px;left:1228.4px;transform:translateX(-50%);">File</div>
<div class="t k" style="top:409.48px;font-size:17.6px;line-height:17.6px;color:#d6d6d6;letter-spacing:-0.4px;left:1342.6px;transform:translateX(-50%);">Test Parameters</div>
<div class="t k" style="top:409.48px;font-size:17.6px;line-height:17.6px;color:#8c8c8c;letter-spacing:-0.4px;left:1446.2px;transform:translateX(-50%);">Edit</div>
<div class="t k" style="top:409.48px;font-size:17.6px;line-height:17.6px;color:#1a1a1a;letter-spacing:-0.4px;left:1512.6px;transform:translateX(-50%);">Graph</div>
<div class="t k" style="top:409.48px;font-size:17.6px;line-height:17.6px;color:#d6d6d6;letter-spacing:-0.4px;left:1594.2px;transform:translateX(-50%);">Reports</div>
<div class="t k" style="top:409.48px;font-size:17.6px;line-height:17.6px;color:#d6d6d6;letter-spacing:-0.4px;left:1681.2px;transform:translateX(-50%);">Options</div>
<div class="t k" style="top:409.48px;font-size:17.6px;line-height:17.6px;color:#d6d6d6;letter-spacing:-0.4px;left:1755.2px;transform:translateX(-50%);">View</div>
<div class="t k" style="top:483px;font-size:17px;line-height:17px;color:#1c1c1c;letter-spacing:-0.48px;left:1241.6px;transform:translateX(-50%);">Default</div>
<div class="t k" style="top:505px;font-size:17px;line-height:17px;color:#1c1c1c;letter-spacing:-0.48px;left:1241.6px;transform:translateX(-50%);">Graphs -</div>
<div class="t k" style="top:483px;font-size:17px;line-height:17px;color:#1c1c1c;letter-spacing:-0.48px;left:1311.6px;transform:translateX(-50%);">Close</div>
<div class="t k" style="top:505px;font-size:17px;line-height:17px;color:#1c1c1c;letter-spacing:-0.48px;left:1311.6px;transform:translateX(-50%);">Graph</div>
<div class="t k" style="top:446.2px;font-size:17px;line-height:17px;color:#1c1c1c;letter-spacing:-0.48px;left:1375.6px;">Manual Scaling</div>
<div class="t k" style="top:474.6px;font-size:17px;line-height:17px;color:#1c1c1c;letter-spacing:-0.48px;left:1375.6px;">Show Points</div>
<div class="t k" style="top:502.6px;font-size:17px;line-height:17px;color:#1c1c1c;letter-spacing:-0.48px;left:1375.6px;">Smooth Curve</div>
<div class="t k" style="top:474.6px;font-size:17px;line-height:17px;color:#1c1c1c;letter-spacing:-0.48px;left:1516.4px;">Invert Y-Axis</div>
<div class="t k" style="top:483px;font-size:17px;line-height:17px;color:#8e8e8e;letter-spacing:-0.48px;left:1640px;transform:translateX(-50%);">Manual</div>
<div class="t k" style="top:505px;font-size:17px;line-height:17px;color:#8e8e8e;letter-spacing:-0.48px;left:1640px;transform:translateX(-50%);">Scaling</div>
<div class="t k" style="top:483px;font-size:17px;line-height:17px;color:#1c1c1c;letter-spacing:-0.48px;left:1704px;transform:translateX(-50%);">Zoom</div>
<div class="t k" style="top:483px;font-size:17px;line-height:17px;color:#1c1c1c;letter-spacing:-0.48px;left:1782.4px;transform:translateX(-50%);">Visible</div>
<div class="t k" style="top:505px;font-size:17px;line-height:17px;color:#1c1c1c;letter-spacing:-0.48px;left:1782.4px;transform:translateX(-50%);">Specimen -</div>
<div class="t k" style="top:483px;font-size:17px;line-height:17px;color:#1c1c1c;letter-spacing:-0.48px;left:1868px;transform:translateX(-50%);">Refresh</div>
<div class="t" style="top:448.08px;font-size:17.2px;line-height:17.2px;color:#1a1a1a;font-weight:bold;letter-spacing:-0.48px;left:1916px;text-decoration:underline;">XY Position</div>
<div class="t k" style="top:474.8px;font-size:16.6px;line-height:16.6px;color:#1c1c1c;letter-spacing:-0.48px;left:1916px;">X: -20.67</div>
<div class="t k" style="top:502.8px;font-size:16.6px;line-height:16.6px;color:#1c1c1c;letter-spacing:-0.48px;left:1916px;">Y: 2423.59</div>
<div class="t k" style="top:531.08px;font-size:16.8px;line-height:16.8px;color:#333333;letter-spacing:-0.48px;left:1272px;transform:translateX(-50%);">Graph</div>
<div class="t k" style="top:531.08px;font-size:16.8px;line-height:16.8px;color:#333333;letter-spacing:-0.48px;left:1624.8px;transform:translateX(-50%);">Options [Stress-Strain Graph]</div>
<div class="t k" style="top:531.08px;font-size:16.8px;line-height:16.8px;color:#333333;letter-spacing:-0.48px;left:1960px;transform:translateX(-50%);">Cursor</div>
<div class="t" style="top:592.52px;font-size:23.2px;line-height:23.2px;color:#ffffff;font-weight:bold;left:2355.2px;transform:translateX(-50%);">Stress-Strain Graph</div>
<div class="t" style="top:1430.88px;font-size:16.8px;line-height:16.8px;color:#333;letter-spacing:-0.4px;left:1970.8px;transform:translateX(-100%);-webkit-text-stroke:0;">0.00</div>
<div class="t" style="left:1983.6px;top:1444px;font-size:16.8px;line-height:16.8px;color:#333;letter-spacing:-0.4px;-webkit-text-stroke:0;transform-origin:0 50%;transform:rotate(47deg);">0.00</div>
<div class="t" style="top:1356px;font-size:16.8px;line-height:16.8px;color:#333;letter-spacing:-0.4px;left:1970.8px;transform:translateX(-100%);-webkit-text-stroke:0;">278.00</div>
<div class="t" style="left:2058.6px;top:1444px;font-size:16.8px;line-height:16.8px;color:#333;letter-spacing:-0.4px;-webkit-text-stroke:0;transform-origin:0 50%;transform:rotate(47deg);">2.00</div>
<div class="t" style="top:1281.12px;font-size:16.8px;line-height:16.8px;color:#333;letter-spacing:-0.4px;left:1970.8px;transform:translateX(-100%);-webkit-text-stroke:0;">556.00</div>
<div class="t" style="left:2133.6px;top:1444px;font-size:16.8px;line-height:16.8px;color:#333;letter-spacing:-0.4px;-webkit-text-stroke:0;transform-origin:0 50%;transform:rotate(47deg);">4.00</div>
<div class="t" style="top:1206.24px;font-size:16.8px;line-height:16.8px;color:#333;letter-spacing:-0.4px;left:1970.8px;transform:translateX(-100%);-webkit-text-stroke:0;">834.00</div>
<div class="t" style="left:2208.6px;top:1444px;font-size:16.8px;line-height:16.8px;color:#333;letter-spacing:-0.4px;-webkit-text-stroke:0;transform-origin:0 50%;transform:rotate(47deg);">6.00</div>
<div class="t" style="top:1131.36px;font-size:16.8px;line-height:16.8px;color:#333;letter-spacing:-0.4px;left:1970.8px;transform:translateX(-100%);-webkit-text-stroke:0;">1112.00</div>
<div class="t" style="left:2283.6px;top:1444px;font-size:16.8px;line-height:16.8px;color:#333;letter-spacing:-0.4px;-webkit-text-stroke:0;transform-origin:0 50%;transform:rotate(47deg);">8.00</div>
<div class="t" style="top:1056.48px;font-size:16.8px;line-height:16.8px;color:#333;letter-spacing:-0.4px;left:1970.8px;transform:translateX(-100%);-webkit-text-stroke:0;">1390.00</div>
<div class="t" style="left:2358.6px;top:1444px;font-size:16.8px;line-height:16.8px;color:#333;letter-spacing:-0.4px;-webkit-text-stroke:0;transform-origin:0 50%;transform:rotate(47deg);">10.00</div>
<div class="t" style="top:981.6px;font-size:16.8px;line-height:16.8px;color:#333;letter-spacing:-0.4px;left:1970.8px;transform:translateX(-100%);-webkit-text-stroke:0;">1668.00</div>
<div class="t" style="left:2433.6px;top:1444px;font-size:16.8px;line-height:16.8px;color:#333;letter-spacing:-0.4px;-webkit-text-stroke:0;transform-origin:0 50%;transform:rotate(47deg);">12.00</div>
<div class="t" style="top:906.72px;font-size:16.8px;line-height:16.8px;color:#333;letter-spacing:-0.4px;left:1970.8px;transform:translateX(-100%);-webkit-text-stroke:0;">1946.00</div>
<div class="t" style="left:2508.6px;top:1444px;font-size:16.8px;line-height:16.8px;color:#333;letter-spacing:-0.4px;-webkit-text-stroke:0;transform-origin:0 50%;transform:rotate(47deg);">14.00</div>
<div class="t" style="top:831.84px;font-size:16.8px;line-height:16.8px;color:#333;letter-spacing:-0.4px;left:1970.8px;transform:translateX(-100%);-webkit-text-stroke:0;">2224.00</div>
<div class="t" style="left:2583.6px;top:1444px;font-size:16.8px;line-height:16.8px;color:#333;letter-spacing:-0.4px;-webkit-text-stroke:0;transform-origin:0 50%;transform:rotate(47deg);">16.00</div>
<div class="t" style="top:756.96px;font-size:16.8px;line-height:16.8px;color:#333;letter-spacing:-0.4px;left:1970.8px;transform:translateX(-100%);-webkit-text-stroke:0;">2502.00</div>
<div class="t" style="left:2658.6px;top:1444px;font-size:16.8px;line-height:16.8px;color:#333;letter-spacing:-0.4px;-webkit-text-stroke:0;transform-origin:0 50%;transform:rotate(47deg);">18.00</div>
<div class="t" style="top:682.08px;font-size:16.8px;line-height:16.8px;color:#333;letter-spacing:-0.4px;left:1970.8px;transform:translateX(-100%);-webkit-text-stroke:0;">2780.00</div>
<div class="t" style="left:2733.6px;top:1444px;font-size:16.8px;line-height:16.8px;color:#333;letter-spacing:-0.4px;-webkit-text-stroke:0;transform-origin:0 50%;transform:rotate(47deg);">20.00</div>
<div class="t" style="top:1500.92px;font-size:16.4px;line-height:16.4px;color:#333;letter-spacing:-0.4px;left:2360px;transform:translateX(-50%);-webkit-text-stroke:0;">Axial Strain (%)</div>
<div class="t" style="left:1900.8px;top:1064px;font-size:16.4px;line-height:16.4px;color:#333;letter-spacing:-0.4px;-webkit-text-stroke:0;transform:translate(-50%,-50%) rotate(-90deg);">Corrected Compressive Stress (psf)</div>
<div class="t" style="top:1686.6px;font-size:16.2px;line-height:16.2px;color:#2f8044;letter-spacing:-0.4px;left:1256.4px;transform:translateX(-50%);">Specimen 1</div>
<div class="t" style="top:1686.6px;font-size:16.2px;line-height:16.2px;color:#3f7ac6;letter-spacing:-0.4px;left:1368px;transform:translateX(-50%);">Specimen 2</div>
<div class="t" style="top:1686.6px;font-size:16.2px;line-height:16.2px;color:#b03a34;letter-spacing:-0.4px;left:1480px;transform:translateX(-50%);">Specimen 3</div>
<div class="t" style="top:1686.6px;font-size:16.2px;line-height:16.2px;color:#c4ac64;letter-spacing:-0.4px;left:1592px;transform:translateX(-50%);">Specimen 4</div>
<div class="t" style="top:1686.2px;font-size:17px;line-height:17px;color:#111;font-weight:bold;letter-spacing:-0.48px;left:1737.6px;transform:translateX(-50%);">Stress-Strain Graph</div>
</div>
</div>
</div></div></body></html>
